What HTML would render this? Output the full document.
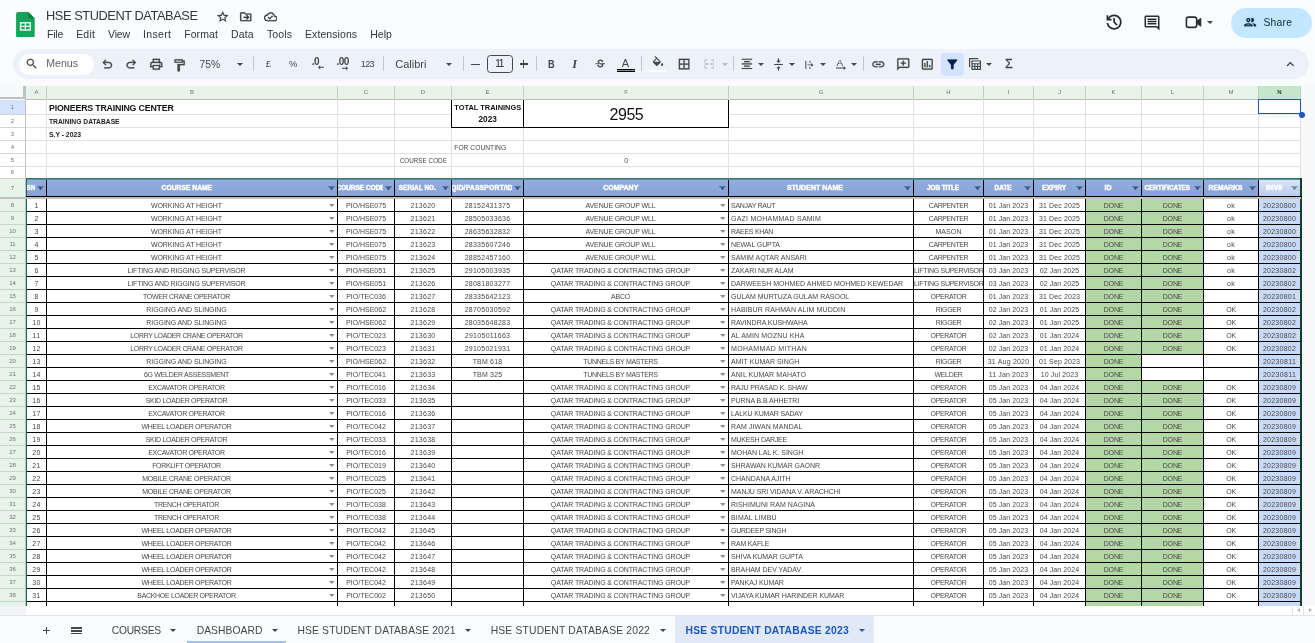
<!DOCTYPE html>
<html lang="en"><head><meta charset="utf-8"><title>HSE STUDENT DATABASE - Google Sheets</title>
<style>
html,body{margin:0;padding:0}
body{width:1315px;height:643px;overflow:hidden;background:#f9fbfd;font-family:"Liberation Sans",sans-serif;color:#1f1f1f}
#app{will-change:transform;position:relative;width:1315px;height:643px;overflow:hidden;background:#f9fbfd}
#app div,#app svg,#app span{position:absolute}
.t{white-space:pre;overflow:visible}
.c{white-space:pre;overflow:hidden;text-align:center;font-size:7px;color:#484848;height:12px;line-height:12px}

.l{text-align:left}
.hl{background:#000}
.gl{background:#e1e1e1}
.rh{left:0;width:25px;text-align:center;font-size:6px;color:#6e7378;height:12px;line-height:12px}
.ch{top:86px;height:13px;line-height:13px;text-align:center;font-size:6px;color:#6e7378}
.hd{white-space:pre;overflow:hidden;text-align:center;font-weight:700;color:#fff;-webkit-text-stroke:0.4px #fff;top:179px;height:17px;line-height:18px}
.ic{fill:#444746}
.da{fill:#8c8c8c}
.dd{width:0;height:0;border-left:2.8px solid transparent;border-right:2.8px solid transparent;border-top:3px solid #8c8c8c}
.tc{width:0;height:0;border-left:3px solid transparent;border-right:3px solid transparent;border-top:3px solid #444746}
.sep{width:1px;height:15px;top:56px;background:#c7c7c7}
</style></head><body><div id="app">
<svg style="left:16.3px;top:11.9px" width="18.8" height="25.5" viewBox="0 0 19 26"><path d="M2 0h10.500l6.500 6.500v17.500a2 2 0 0 1-2 2H2a2 2 0 0 1-2-2V2a2 2 0 0 1 2-2z" fill="#17a35b"/><path d="M12.500 0l6.500 6.500h-4.500a2 2 0 0 1-2-2z" fill="#0b8043"/><path d="M3.800 10.200h11.400v8.900h-11.400z M5.300 11.700v2.200h3.500v-2.200z M10.200 11.700v2.200h3.500v-2.200z M5.300 15.300v2.300h3.500v-2.300z M10.200 15.300v2.300h3.500v-2.300z" fill="#e8f5ee" fill-rule="evenodd"/></svg><div class="t" style="left:46.0px;top:5.6px;height:20px;line-height:20px;font-size:12.8px;letter-spacing:-0.425px;font-weight:400;color:#33373a;">HSE STUDENT DATABASE</div><div class="t" style="left:47.0px;top:24.0px;height:20px;line-height:20px;font-size:10.5px;letter-spacing:-0.23px;font-weight:400;color:#33373a;">File</div><div class="t" style="left:76.2px;top:24.0px;height:20px;line-height:20px;font-size:10.5px;letter-spacing:0.177px;font-weight:400;color:#33373a;">Edit</div><div class="t" style="left:108.0px;top:24.0px;height:20px;line-height:20px;font-size:10.5px;letter-spacing:-0.145px;font-weight:400;color:#33373a;">View</div><div class="t" style="left:143.0px;top:24.0px;height:20px;line-height:20px;font-size:10.5px;letter-spacing:0.322px;font-weight:400;color:#33373a;">Insert</div><div class="t" style="left:184.2px;top:24.0px;height:20px;line-height:20px;font-size:10.5px;letter-spacing:0.089px;font-weight:400;color:#33373a;">Format</div><div class="t" style="left:231.0px;top:24.0px;height:20px;line-height:20px;font-size:10.5px;letter-spacing:0.153px;font-weight:400;color:#33373a;">Data</div><div class="t" style="left:267.0px;top:24.0px;height:20px;line-height:20px;font-size:10.5px;letter-spacing:0.097px;font-weight:400;color:#33373a;">Tools</div><div class="t" style="left:305.0px;top:24.0px;height:20px;line-height:20px;font-size:10.5px;letter-spacing:0.082px;font-weight:400;color:#33373a;">Extensions</div><div class="t" style="left:370.2px;top:24.0px;height:20px;line-height:20px;font-size:10.5px;letter-spacing:0.048px;font-weight:400;color:#33373a;">Help</div><div style="left:12.5px;top:49px;width:1296.5px;height:30px;border-radius:15px;background:#edf2fa"></div><div style="left:19px;top:54px;width:74.5px;height:21px;border-radius:10.5px;background:#fff"></div><div class="t" style="left:46.2px;top:53.0px;height:20px;line-height:20px;font-size:10.59px;letter-spacing:0.01px;font-weight:400;color:#5f6368;">Menus</div><div class="t" style="left:199.5px;top:54.7px;height:20px;line-height:20px;font-size:10.24px;letter-spacing:0.005px;font-weight:400;color:#444746;">75%</div><div class="t" style="left:265.8px;top:54.0px;height:20px;line-height:20px;font-size:9.33px;letter-spacing:-0.003px;font-weight:400;color:#444746;">£</div><div class="t" style="left:289.0px;top:54.0px;height:20px;line-height:20px;font-size:9.44px;letter-spacing:0.009px;font-weight:400;color:#444746;">%</div><div class="t" style="left:360.8px;top:54.2px;height:20px;line-height:20px;font-size:9.2px;letter-spacing:-0.715px;font-weight:400;color:#444746;">123</div><div class="t" style="left:395.2px;top:54.0px;height:20px;line-height:20px;font-size:11.04px;letter-spacing:0.005px;font-weight:400;color:#444746;">Calibri</div><div class="t" style="left:495.2px;top:54.2px;height:20px;line-height:20px;font-size:10px;letter-spacing:-1.2px;color:#1f1f1f">11</div><div style="left:487px;top:55px;width:25.75px;height:17.5px;border:1px solid #444746;border-radius:3.5px;box-sizing:border-box"></div><div class="sep" style="left:253px"></div><div class="sep" style="left:383px"></div><div class="sep" style="left:463px"></div><div class="sep" style="left:536px"></div><div class="sep" style="left:641px"></div><div class="sep" style="left:733px"></div><div class="sep" style="left:863px"></div><div class="tc" style="left:236.5px;top:63px"></div><div class="tc" style="left:445.8px;top:63px"></div><div class="tc" style="left:757.5px;top:63px"></div><div class="tc" style="left:788.5px;top:63px"></div><div class="tc" style="left:819.5px;top:63px"></div><div class="tc" style="left:850.8px;top:63px"></div><div class="tc" style="left:986px;top:63px"></div><div class="tc" style="left:721.5px;top:63px;border-top-color:#b9bcc0"></div><div style="left:940.5px;top:53px;width:23px;height:22.5px;border-radius:4px;background:#d3e3fd"></div><div style="left:1231px;top:8px;width:81px;height:30px;border-radius:15px;background:#c2e7ff"></div><div class="t" style="left:1263.5px;top:12.9px;height:20px;line-height:20px;font-size:10.3px;letter-spacing:0.243px;font-weight:400;color:#0b2a42;">Share</div><div class="tc" style="left:1206.8px;top:21px"></div><div style="left:0;top:86px;width:1301px;height:520px;background:#fff"></div><div style="left:1301px;top:86px;width:14px;height:530px;background:#f8f9fa"></div><div style="left:0;top:86px;width:26px;height:13px;background:#f8f9fa"></div><div style="left:26px;top:86px;width:1275px;height:13px;background:#e6f4ea"></div><div style="left:1259px;top:86px;width:41px;height:13px;background:#c4e7cb"></div><div style="left:23px;top:86px;width:3px;height:14px;background:#c0c0c0"></div><div style="left:0;top:97px;width:26px;height:3px;background:#c0c0c0"></div><div class="ch" style="left:27px;width:19px;color:#6e7378;font-weight:400">A</div><div style="left:46px;top:86px;width:1px;height:13px;background:#c6cac7"></div><div class="ch" style="left:47px;width:290px;color:#6e7378;font-weight:400">B</div><div style="left:337px;top:86px;width:1px;height:13px;background:#c6cac7"></div><div class="ch" style="left:338px;width:56px;color:#6e7378;font-weight:400">C</div><div style="left:394px;top:86px;width:1px;height:13px;background:#c6cac7"></div><div class="ch" style="left:395px;width:56px;color:#6e7378;font-weight:400">D</div><div style="left:451px;top:86px;width:1px;height:13px;background:#c6cac7"></div><div class="ch" style="left:452px;width:71px;color:#6e7378;font-weight:400">E</div><div style="left:523px;top:86px;width:1px;height:13px;background:#c6cac7"></div><div class="ch" style="left:524px;width:204px;color:#6e7378;font-weight:400">F</div><div style="left:728px;top:86px;width:1px;height:13px;background:#c6cac7"></div><div class="ch" style="left:729px;width:184px;color:#6e7378;font-weight:400">G</div><div style="left:913px;top:86px;width:1px;height:13px;background:#c6cac7"></div><div class="ch" style="left:914px;width:69px;color:#6e7378;font-weight:400">H</div><div style="left:983px;top:86px;width:1px;height:13px;background:#c6cac7"></div><div class="ch" style="left:984px;width:49px;color:#6e7378;font-weight:400">I</div><div style="left:1033px;top:86px;width:1px;height:13px;background:#c6cac7"></div><div class="ch" style="left:1034px;width:51px;color:#6e7378;font-weight:400">J</div><div style="left:1085px;top:86px;width:1px;height:13px;background:#c6cac7"></div><div class="ch" style="left:1086px;width:55px;color:#6e7378;font-weight:400">K</div><div style="left:1141px;top:86px;width:1px;height:13px;background:#c6cac7"></div><div class="ch" style="left:1142px;width:61px;color:#6e7378;font-weight:400">L</div><div style="left:1203px;top:86px;width:1px;height:13px;background:#c6cac7"></div><div class="ch" style="left:1204px;width:54px;color:#6e7378;font-weight:400">M</div><div style="left:1258px;top:86px;width:1px;height:13px;background:#c6cac7"></div><div class="ch" style="left:1259px;width:41px;color:#3c4043;font-weight:700">N</div><div style="left:1300px;top:86px;width:1px;height:13px;background:#c6cac7"></div><div style="left:26px;top:99px;width:1275px;height:1px;background:#bdbdbd"></div><div style="left:0;top:99px;width:25px;height:507px;background:#fff"></div><div style="left:0;top:100px;width:25px;height:14px;background:#d3e3fd"></div><div style="left:0;top:178px;width:25px;height:428px;background:#e6f4ea"></div><div style="left:25px;top:99px;width:1px;height:507px;background:#c0c0c0"></div><div class="rh" style="top:100.5px">1</div><div style="left:0;top:114px;width:25px;height:1px;background:#d5d5d5"></div><div class="rh" style="top:114.5px">2</div><div style="left:0;top:127px;width:25px;height:1px;background:#d5d5d5"></div><div class="rh" style="top:127.5px">3</div><div style="left:0;top:140px;width:25px;height:1px;background:#d5d5d5"></div><div class="rh" style="top:140.5px">4</div><div style="left:0;top:153px;width:25px;height:1px;background:#d5d5d5"></div><div class="rh" style="top:153.5px">5</div><div style="left:0;top:166px;width:25px;height:1px;background:#d5d5d5"></div><div class="rh" style="top:166.0px">6</div><div style="left:0;top:178px;width:25px;height:1px;background:#d5d5d5"></div><div class="rh" style="top:182.0px">7</div><div class="rh" style="top:198.5px">8</div><div style="left:0;top:211px;width:25px;height:1px;background:#c9d3cc"></div><div class="rh" style="top:211.5px">9</div><div style="left:0;top:224px;width:25px;height:1px;background:#c9d3cc"></div><div class="rh" style="top:224.5px">10</div><div style="left:0;top:237px;width:25px;height:1px;background:#c9d3cc"></div><div class="rh" style="top:237.5px">11</div><div style="left:0;top:250px;width:25px;height:1px;background:#c9d3cc"></div><div class="rh" style="top:250.5px">12</div><div style="left:0;top:263px;width:25px;height:1px;background:#c9d3cc"></div><div class="rh" style="top:263.5px">13</div><div style="left:0;top:276px;width:25px;height:1px;background:#c9d3cc"></div><div class="rh" style="top:276.5px">14</div><div style="left:0;top:289px;width:25px;height:1px;background:#c9d3cc"></div><div class="rh" style="top:289.5px">15</div><div style="left:0;top:302px;width:25px;height:1px;background:#c9d3cc"></div><div class="rh" style="top:302.5px">16</div><div style="left:0;top:315px;width:25px;height:1px;background:#c9d3cc"></div><div class="rh" style="top:315.5px">17</div><div style="left:0;top:328px;width:25px;height:1px;background:#c9d3cc"></div><div class="rh" style="top:328.5px">18</div><div style="left:0;top:341px;width:25px;height:1px;background:#c9d3cc"></div><div class="rh" style="top:341.5px">19</div><div style="left:0;top:354px;width:25px;height:1px;background:#c9d3cc"></div><div class="rh" style="top:354.5px">20</div><div style="left:0;top:367px;width:25px;height:1px;background:#c9d3cc"></div><div class="rh" style="top:367.5px">21</div><div style="left:0;top:380px;width:25px;height:1px;background:#c9d3cc"></div><div class="rh" style="top:380.5px">22</div><div style="left:0;top:393px;width:25px;height:1px;background:#c9d3cc"></div><div class="rh" style="top:393.5px">23</div><div style="left:0;top:406px;width:25px;height:1px;background:#c9d3cc"></div><div class="rh" style="top:406.5px">24</div><div style="left:0;top:419px;width:25px;height:1px;background:#c9d3cc"></div><div class="rh" style="top:419.5px">25</div><div style="left:0;top:432px;width:25px;height:1px;background:#c9d3cc"></div><div class="rh" style="top:432.5px">26</div><div style="left:0;top:445px;width:25px;height:1px;background:#c9d3cc"></div><div class="rh" style="top:445.5px">27</div><div style="left:0;top:458px;width:25px;height:1px;background:#c9d3cc"></div><div class="rh" style="top:458.5px">28</div><div style="left:0;top:471px;width:25px;height:1px;background:#c9d3cc"></div><div class="rh" style="top:471.5px">29</div><div style="left:0;top:484px;width:25px;height:1px;background:#c9d3cc"></div><div class="rh" style="top:484.5px">30</div><div style="left:0;top:497px;width:25px;height:1px;background:#c9d3cc"></div><div class="rh" style="top:497.5px">31</div><div style="left:0;top:510px;width:25px;height:1px;background:#c9d3cc"></div><div class="rh" style="top:510.5px">32</div><div style="left:0;top:523px;width:25px;height:1px;background:#c9d3cc"></div><div class="rh" style="top:523.5px">33</div><div style="left:0;top:536px;width:25px;height:1px;background:#c9d3cc"></div><div class="rh" style="top:536.5px">34</div><div style="left:0;top:549px;width:25px;height:1px;background:#c9d3cc"></div><div class="rh" style="top:549.5px">35</div><div style="left:0;top:562px;width:25px;height:1px;background:#c9d3cc"></div><div class="rh" style="top:562.5px">36</div><div style="left:0;top:575px;width:25px;height:1px;background:#c9d3cc"></div><div class="rh" style="top:575.5px">37</div><div style="left:0;top:588px;width:25px;height:1px;background:#c9d3cc"></div><div class="rh" style="top:588.5px">38</div><div style="left:0;top:601px;width:25px;height:1px;background:#c9d3cc"></div><div class="rh" style="top:601.5px;height:4px;overflow:hidden">39</div><div class="gl" style="left:26px;top:114px;width:1275px;height:1px"></div><div class="gl" style="left:26px;top:127px;width:1275px;height:1px"></div><div class="gl" style="left:26px;top:140px;width:1275px;height:1px"></div><div class="gl" style="left:26px;top:153px;width:1275px;height:1px"></div><div class="gl" style="left:26px;top:166px;width:1275px;height:1px"></div><div class="gl" style="left:46px;top:99px;width:1px;height:79px"></div><div class="gl" style="left:337px;top:99px;width:1px;height:79px"></div><div class="gl" style="left:394px;top:99px;width:1px;height:79px"></div><div class="gl" style="left:451px;top:99px;width:1px;height:79px"></div><div class="gl" style="left:523px;top:99px;width:1px;height:79px"></div><div class="gl" style="left:728px;top:99px;width:1px;height:79px"></div><div class="gl" style="left:913px;top:99px;width:1px;height:79px"></div><div class="gl" style="left:983px;top:99px;width:1px;height:79px"></div><div class="gl" style="left:1033px;top:99px;width:1px;height:79px"></div><div class="gl" style="left:1085px;top:99px;width:1px;height:79px"></div><div class="gl" style="left:1141px;top:99px;width:1px;height:79px"></div><div class="gl" style="left:1203px;top:99px;width:1px;height:79px"></div><div class="gl" style="left:1258px;top:99px;width:1px;height:79px"></div><div class="gl" style="left:1300px;top:99px;width:1px;height:79px"></div><div style="left:452px;top:100px;width:276px;height:27px;background:#fff"></div><div class="hl" style="left:451px;top:100px;width:1px;height:28px"></div><div class="hl" style="left:523px;top:100px;width:1px;height:28px"></div><div class="hl" style="left:728px;top:100px;width:1px;height:28px"></div><div class="hl" style="left:451px;top:127px;width:278px;height:1px"></div><div class="t" style="left:49.0px;top:97.6px;height:20px;line-height:20px;font-size:8.8px;letter-spacing:-0.185px;font-weight:700;color:#111;">PIONEERS TRAINING CENTER</div><div class="t" style="left:49.0px;top:111.6px;height:20px;line-height:20px;font-size:6.71px;letter-spacing:0.005px;font-weight:700;color:#222;">TRAINING DATABASE</div><div class="t" style="left:49.0px;top:124.5px;height:20px;line-height:20px;font-size:6.8px;letter-spacing:0.0px;font-weight:700;color:#222;">S.Y - 2023</div><div class="t" style="left:454.3px;top:98.2px;height:20px;line-height:20px;font-size:7.43px;letter-spacing:0.007px;font-weight:700;color:#111;">TOTAL TRAININGS</div><div class="t" style="left:478.5px;top:109.6px;height:20px;line-height:20px;font-size:8.25px;letter-spacing:0.035px;font-weight:700;color:#111;">2023</div><div class="t" style="left:609.5px;top:104.6px;height:20px;line-height:20px;font-size:16px;letter-spacing:-0.448px;font-weight:400;color:#111;">2955</div><div class="t" style="left:454.3px;top:138.2px;height:20px;line-height:20px;font-size:6.71px;letter-spacing:0.003px;font-weight:400;color:#484848;">FOR COUNTING</div><div class="t" style="left:399.7px;top:151.0px;height:20px;line-height:20px;font-size:6.34px;letter-spacing:0.007px;font-weight:400;color:#484848;">COURSE CODE</div><div class="t" style="left:624.3px;top:151.0px;height:20px;line-height:20px;font-size:7.01px;letter-spacing:-0.006px;font-weight:400;color:#484848;">0</div><div style="left:27px;top:179px;width:1274px;height:17px;background:linear-gradient(#94aedf,#86a2d7)"></div><div style="left:1259px;top:179px;width:42px;height:17px;background:linear-gradient(#dbe6f8,#b9cdf0)"></div><div class="hd" style="left:27px;width:8px;font-size:6.9px;letter-spacing:-0.16px"><span style="position:absolute;left:50%;transform:translateX(-50%)">SN</span></div><svg style="left:37.1px;top:185.7px" width="7" height="4.800" viewBox="0 0 7 4.800"><path d="M0 0h7v1.100H0z" fill="#5d7ba6"/><path d="M1.100 1.100h4.800L4.500 3H2.500z M2.500 3h2L3.500 4.700z" fill="#3a5779"/></svg><div class="t" style="left:161.6px;top:178.0px;height:20px;line-height:20px;font-size:6.74px;letter-spacing:-0.001px;font-weight:700;color:#fff;-webkit-text-stroke:0.4px #fff;">COURSE NAME</div><svg style="left:328.1px;top:185.7px" width="7" height="4.800" viewBox="0 0 7 4.800"><path d="M0 0h7v1.100H0z" fill="#5d7ba6"/><path d="M1.100 1.100h4.800L4.500 3H2.500z M2.500 3h2L3.500 4.700z" fill="#3a5779"/></svg><div class="hd" style="left:338px;width:45px;font-size:6.9px;letter-spacing:-0.27px"><span style="position:absolute;left:50%;transform:translateX(-50%)">COURSE CODE</span></div><svg style="left:385.1px;top:185.7px" width="7" height="4.800" viewBox="0 0 7 4.800"><path d="M0 0h7v1.100H0z" fill="#5d7ba6"/><path d="M1.100 1.100h4.800L4.500 3H2.500z M2.500 3h2L3.500 4.700z" fill="#3a5779"/></svg><div class="t" style="left:398.8px;top:178.0px;height:20px;line-height:20px;font-size:6.52px;letter-spacing:0.003px;font-weight:700;color:#fff;-webkit-text-stroke:0.4px #fff;">SERIAL NO.</div><svg style="left:442.1px;top:185.7px" width="7" height="4.800" viewBox="0 0 7 4.800"><path d="M0 0h7v1.100H0z" fill="#5d7ba6"/><path d="M1.100 1.100h4.800L4.500 3H2.500z M2.500 3h2L3.500 4.700z" fill="#3a5779"/></svg><div class="hd" style="left:452px;width:60px;font-size:6.9px;letter-spacing:0.1px"><span style="position:absolute;left:50%;transform:translateX(-50%)">QID/PASSPORT/ID</span></div><svg style="left:514.1px;top:185.7px" width="7" height="4.800" viewBox="0 0 7 4.800"><path d="M0 0h7v1.100H0z" fill="#5d7ba6"/><path d="M1.100 1.100h4.800L4.500 3H2.500z M2.500 3h2L3.500 4.700z" fill="#3a5779"/></svg><div class="t" style="left:603.2px;top:178.0px;height:20px;line-height:20px;font-size:6.97px;letter-spacing:-0.001px;font-weight:700;color:#fff;-webkit-text-stroke:0.4px #fff;">COMPANY</div><svg style="left:719.1px;top:185.7px" width="7" height="4.800" viewBox="0 0 7 4.800"><path d="M0 0h7v1.100H0z" fill="#5d7ba6"/><path d="M1.100 1.100h4.800L4.500 3H2.500z M2.500 3h2L3.500 4.700z" fill="#3a5779"/></svg><div class="t" style="left:787.0px;top:178.0px;height:20px;line-height:20px;font-size:7.05px;letter-spacing:0.001px;font-weight:700;color:#fff;-webkit-text-stroke:0.4px #fff;">STUDENT NAME</div><svg style="left:904.1px;top:185.7px" width="7" height="4.800" viewBox="0 0 7 4.800"><path d="M0 0h7v1.100H0z" fill="#5d7ba6"/><path d="M1.100 1.100h4.800L4.500 3H2.500z M2.500 3h2L3.500 4.700z" fill="#3a5779"/></svg><div class="t" style="left:927.0px;top:178.0px;height:20px;line-height:20px;font-size:6.46px;letter-spacing:-0.109px;font-weight:700;color:#fff;-webkit-text-stroke:0.4px #fff;">JOB TITLE</div><svg style="left:974.1px;top:185.7px" width="7" height="4.800" viewBox="0 0 7 4.800"><path d="M0 0h7v1.100H0z" fill="#5d7ba6"/><path d="M1.100 1.100h4.800L4.500 3H2.500z M2.500 3h2L3.500 4.700z" fill="#3a5779"/></svg><div class="t" style="left:994.6px;top:178.0px;height:20px;line-height:20px;font-size:6.46px;letter-spacing:-0.023px;font-weight:700;color:#fff;-webkit-text-stroke:0.4px #fff;">DATE</div><svg style="left:1024.1px;top:185.7px" width="7" height="4.800" viewBox="0 0 7 4.800"><path d="M0 0h7v1.100H0z" fill="#5d7ba6"/><path d="M1.100 1.100h4.800L4.500 3H2.500z M2.500 3h2L3.500 4.700z" fill="#3a5779"/></svg><div class="t" style="left:1042.3px;top:178.0px;height:20px;line-height:20px;font-size:6.53px;letter-spacing:0.005px;font-weight:700;color:#fff;-webkit-text-stroke:0.4px #fff;">EXPIRY</div><svg style="left:1076.1px;top:185.7px" width="7" height="4.800" viewBox="0 0 7 4.800"><path d="M0 0h7v1.100H0z" fill="#5d7ba6"/><path d="M1.100 1.100h4.800L4.500 3H2.500z M2.500 3h2L3.500 4.700z" fill="#3a5779"/></svg><div class="t" style="left:1104.4px;top:178.0px;height:20px;line-height:20px;font-size:7.14px;letter-spacing:0.037px;font-weight:700;color:#fff;-webkit-text-stroke:0.4px #fff;">ID</div><svg style="left:1132.1px;top:185.7px" width="7" height="4.800" viewBox="0 0 7 4.800"><path d="M0 0h7v1.100H0z" fill="#5d7ba6"/><path d="M1.100 1.100h4.800L4.500 3H2.500z M2.500 3h2L3.500 4.700z" fill="#3a5779"/></svg><div class="t" style="left:1144.4px;top:178.0px;height:20px;line-height:20px;font-size:6.46px;letter-spacing:-0.075px;font-weight:700;color:#fff;-webkit-text-stroke:0.4px #fff;">CERTIFICATES</div><svg style="left:1194.1px;top:185.7px" width="7" height="4.800" viewBox="0 0 7 4.800"><path d="M0 0h7v1.100H0z" fill="#5d7ba6"/><path d="M1.100 1.100h4.800L4.500 3H2.500z M2.500 3h2L3.500 4.700z" fill="#3a5779"/></svg><div class="t" style="left:1208.6px;top:178.0px;height:20px;line-height:20px;font-size:6.69px;letter-spacing:-0.002px;font-weight:700;color:#fff;-webkit-text-stroke:0.4px #fff;">REMARKS</div><svg style="left:1249.1px;top:185.7px" width="7" height="4.800" viewBox="0 0 7 4.800"><path d="M0 0h7v1.100H0z" fill="#5d7ba6"/><path d="M1.100 1.100h4.800L4.500 3H2.500z M2.500 3h2L3.500 4.700z" fill="#3a5779"/></svg><div class="t" style="left:1266.0px;top:178.0px;height:20px;line-height:20px;font-size:7.14px;letter-spacing:0.139px;font-weight:700;color:#fff;-webkit-text-stroke:0.4px #fff;">INV#</div><svg style="left:1291.1px;top:185.7px" width="7" height="4.800" viewBox="0 0 7 4.800"><path d="M0 0h7v1.100H0z" fill="#8ea2bd"/><path d="M1.100 1.100h4.800L4.500 3H2.500z M2.500 3h2L3.500 4.700z" fill="#74879f"/></svg><div style="left:1086px;top:199px;width:55px;height:407px;background:#b3d7a5"></div><div style="left:1142px;top:199px;width:61px;height:407px;background:#b3d7a5"></div><div style="left:1142px;top:355px;width:61px;height:25px;background:#fff"></div><div style="left:1259px;top:199px;width:42px;height:407px;background:#c9daf8"></div><div class="c" style="left:27px;top:200px;width:19px;letter-spacing:0.25px">1</div><div class="c" style="left:47px;top:200px;width:279px;letter-spacing:-0.08px">WORKING AT HEIGHT</div><div class="c" style="left:338px;top:200px;width:56px;letter-spacing:0.01px">PIO/HSE075</div><div class="c" style="left:395px;top:200px;width:56px;letter-spacing:0.26px">213620</div><div class="c" style="left:452px;top:200px;width:71px;letter-spacing:0.26px">28152431375</div><div class="c" style="left:524px;top:200px;width:193px;letter-spacing:-0.14px">AVENUE GROUP WLL</div><div class="c l" style="left:731px;top:200px;width:182px;letter-spacing:-0.28px">SANJAY RAUT</div><div class="c" style="left:914px;top:200px;width:69px;letter-spacing:-0.41px">CARPENTER</div><div class="c" style="left:984px;top:200px;width:49px;letter-spacing:0.08px">01 Jan 2023</div><div class="c" style="left:1034px;top:200px;width:51px;letter-spacing:0.13px">31 Dec 2025</div><div class="c" style="left:1086px;top:200px;width:55px;letter-spacing:-0.12px">DONE</div><div class="c" style="left:1142px;top:200px;width:61px;letter-spacing:-0.12px">DONE</div><div class="c" style="left:1204px;top:200px;width:54px;letter-spacing:0.32px">ok</div><div class="c" style="left:1259px;top:200px;width:41px;letter-spacing:0.26px">20230800</div><svg class="da" style="left:328.6px;top:204px" width="5.600" height="3" viewBox="0 0 5.600 3"><path d="M0 0h5.600L2.800 3z"/></svg><svg class="da" style="left:719.6px;top:204px" width="5.600" height="3" viewBox="0 0 5.600 3"><path d="M0 0h5.600L2.800 3z"/></svg><div class="c" style="left:27px;top:213px;width:19px;letter-spacing:0.25px">2</div><div class="c" style="left:47px;top:213px;width:279px;letter-spacing:-0.08px">WORKING AT HEIGHT</div><div class="c" style="left:338px;top:213px;width:56px;letter-spacing:0.01px">PIO/HSE075</div><div class="c" style="left:395px;top:213px;width:56px;letter-spacing:0.26px">213621</div><div class="c" style="left:452px;top:213px;width:71px;letter-spacing:0.26px">28505033636</div><div class="c" style="left:524px;top:213px;width:193px;letter-spacing:-0.14px">AVENUE GROUP WLL</div><div class="c l" style="left:731px;top:213px;width:182px;letter-spacing:0.24px">GAZI MOHAMMAD SAMIM</div><div class="c" style="left:914px;top:213px;width:69px;letter-spacing:-0.41px">CARPENTER</div><div class="c" style="left:984px;top:213px;width:49px;letter-spacing:0.08px">01 Jan 2023</div><div class="c" style="left:1034px;top:213px;width:51px;letter-spacing:0.13px">31 Dec 2025</div><div class="c" style="left:1086px;top:213px;width:55px;letter-spacing:-0.12px">DONE</div><div class="c" style="left:1142px;top:213px;width:61px;letter-spacing:-0.12px">DONE</div><div class="c" style="left:1204px;top:213px;width:54px;letter-spacing:0.32px">ok</div><div class="c" style="left:1259px;top:213px;width:41px;letter-spacing:0.26px">20230800</div><svg class="da" style="left:328.6px;top:217px" width="5.600" height="3" viewBox="0 0 5.600 3"><path d="M0 0h5.600L2.800 3z"/></svg><svg class="da" style="left:719.6px;top:217px" width="5.600" height="3" viewBox="0 0 5.600 3"><path d="M0 0h5.600L2.800 3z"/></svg><div class="c" style="left:27px;top:226px;width:19px;letter-spacing:0.25px">3</div><div class="c" style="left:47px;top:226px;width:279px;letter-spacing:-0.08px">WORKING AT HEIGHT</div><div class="c" style="left:338px;top:226px;width:56px;letter-spacing:0.01px">PIO/HSE075</div><div class="c" style="left:395px;top:226px;width:56px;letter-spacing:0.26px">213622</div><div class="c" style="left:452px;top:226px;width:71px;letter-spacing:0.26px">28635632832</div><div class="c" style="left:524px;top:226px;width:193px;letter-spacing:-0.14px">AVENUE GROUP WLL</div><div class="c l" style="left:731px;top:226px;width:182px;letter-spacing:-0.3px">RAEES KHAN</div><div class="c" style="left:914px;top:226px;width:69px;letter-spacing:0.11px">MASON</div><div class="c" style="left:984px;top:226px;width:49px;letter-spacing:0.08px">01 Jan 2023</div><div class="c" style="left:1034px;top:226px;width:51px;letter-spacing:0.13px">31 Dec 2025</div><div class="c" style="left:1086px;top:226px;width:55px;letter-spacing:-0.12px">DONE</div><div class="c" style="left:1142px;top:226px;width:61px;letter-spacing:-0.12px">DONE</div><div class="c" style="left:1204px;top:226px;width:54px;letter-spacing:0.32px">ok</div><div class="c" style="left:1259px;top:226px;width:41px;letter-spacing:0.26px">20230800</div><svg class="da" style="left:328.6px;top:230px" width="5.600" height="3" viewBox="0 0 5.600 3"><path d="M0 0h5.600L2.800 3z"/></svg><svg class="da" style="left:719.6px;top:230px" width="5.600" height="3" viewBox="0 0 5.600 3"><path d="M0 0h5.600L2.800 3z"/></svg><div class="c" style="left:27px;top:239px;width:19px;letter-spacing:0.25px">4</div><div class="c" style="left:47px;top:239px;width:279px;letter-spacing:-0.08px">WORKING AT HEIGHT</div><div class="c" style="left:338px;top:239px;width:56px;letter-spacing:0.01px">PIO/HSE075</div><div class="c" style="left:395px;top:239px;width:56px;letter-spacing:0.26px">213623</div><div class="c" style="left:452px;top:239px;width:71px;letter-spacing:0.26px">28335607246</div><div class="c" style="left:524px;top:239px;width:193px;letter-spacing:-0.14px">AVENUE GROUP WLL</div><div class="c l" style="left:731px;top:239px;width:182px;letter-spacing:-0.09px">NEWAL GUPTA</div><div class="c" style="left:914px;top:239px;width:69px;letter-spacing:-0.41px">CARPENTER</div><div class="c" style="left:984px;top:239px;width:49px;letter-spacing:0.08px">01 Jan 2023</div><div class="c" style="left:1034px;top:239px;width:51px;letter-spacing:0.13px">31 Dec 2025</div><div class="c" style="left:1086px;top:239px;width:55px;letter-spacing:-0.12px">DONE</div><div class="c" style="left:1142px;top:239px;width:61px;letter-spacing:-0.12px">DONE</div><div class="c" style="left:1204px;top:239px;width:54px;letter-spacing:0.32px">ok</div><div class="c" style="left:1259px;top:239px;width:41px;letter-spacing:0.26px">20230800</div><svg class="da" style="left:328.6px;top:243px" width="5.600" height="3" viewBox="0 0 5.600 3"><path d="M0 0h5.600L2.800 3z"/></svg><svg class="da" style="left:719.6px;top:243px" width="5.600" height="3" viewBox="0 0 5.600 3"><path d="M0 0h5.600L2.800 3z"/></svg><div class="c" style="left:27px;top:252px;width:19px;letter-spacing:0.25px">5</div><div class="c" style="left:47px;top:252px;width:279px;letter-spacing:-0.08px">WORKING AT HEIGHT</div><div class="c" style="left:338px;top:252px;width:56px;letter-spacing:0.01px">PIO/HSE075</div><div class="c" style="left:395px;top:252px;width:56px;letter-spacing:0.26px">213624</div><div class="c" style="left:452px;top:252px;width:71px;letter-spacing:0.26px">28852457160</div><div class="c" style="left:524px;top:252px;width:193px;letter-spacing:-0.14px">AVENUE GROUP WLL</div><div class="c l" style="left:731px;top:252px;width:182px;letter-spacing:-0.0px">SAMIM AQTAR ANSARI</div><div class="c" style="left:914px;top:252px;width:69px;letter-spacing:-0.41px">CARPENTER</div><div class="c" style="left:984px;top:252px;width:49px;letter-spacing:0.08px">01 Jan 2023</div><div class="c" style="left:1034px;top:252px;width:51px;letter-spacing:0.13px">31 Dec 2025</div><div class="c" style="left:1086px;top:252px;width:55px;letter-spacing:-0.12px">DONE</div><div class="c" style="left:1142px;top:252px;width:61px;letter-spacing:-0.12px">DONE</div><div class="c" style="left:1204px;top:252px;width:54px;letter-spacing:0.32px">ok</div><div class="c" style="left:1259px;top:252px;width:41px;letter-spacing:0.26px">20230800</div><svg class="da" style="left:328.6px;top:256px" width="5.600" height="3" viewBox="0 0 5.600 3"><path d="M0 0h5.600L2.800 3z"/></svg><svg class="da" style="left:719.6px;top:256px" width="5.600" height="3" viewBox="0 0 5.600 3"><path d="M0 0h5.600L2.800 3z"/></svg><div class="c" style="left:27px;top:265px;width:19px;letter-spacing:0.25px">6</div><div class="c" style="left:47px;top:265px;width:279px;letter-spacing:-0.18px">LIFTING AND RIGGING SUPERVISOR</div><div class="c" style="left:338px;top:265px;width:56px;letter-spacing:0.01px">PIO/HSE051</div><div class="c" style="left:395px;top:265px;width:56px;letter-spacing:0.26px">213625</div><div class="c" style="left:452px;top:265px;width:71px;letter-spacing:0.26px">29105003935</div><div class="c" style="left:524px;top:265px;width:193px;letter-spacing:-0.14px">QATAR TRADING &amp; CONTRACTING GROUP</div><div class="c l" style="left:731px;top:265px;width:182px;letter-spacing:-0.03px">ZAKARI NUR ALAM</div><div class="c" style="left:914px;top:265px;width:69px;letter-spacing:-0.28px">LIFTING SUPERVISOR</div><div class="c" style="left:984px;top:265px;width:49px;letter-spacing:0.08px">03 Jan 2023</div><div class="c" style="left:1034px;top:265px;width:51px;letter-spacing:0.08px">02 Jan 2025</div><div class="c" style="left:1086px;top:265px;width:55px;letter-spacing:-0.12px">DONE</div><div class="c" style="left:1142px;top:265px;width:61px;letter-spacing:-0.12px">DONE</div><div class="c" style="left:1204px;top:265px;width:54px;letter-spacing:0.32px">ok</div><div class="c" style="left:1259px;top:265px;width:41px;letter-spacing:0.26px">20230802</div><svg class="da" style="left:328.6px;top:269px" width="5.600" height="3" viewBox="0 0 5.600 3"><path d="M0 0h5.600L2.800 3z"/></svg><svg class="da" style="left:719.6px;top:269px" width="5.600" height="3" viewBox="0 0 5.600 3"><path d="M0 0h5.600L2.800 3z"/></svg><div class="c" style="left:27px;top:278px;width:19px;letter-spacing:0.25px">7</div><div class="c" style="left:47px;top:278px;width:279px;letter-spacing:-0.18px">LIFTING AND RIGGING SUPERVISOR</div><div class="c" style="left:338px;top:278px;width:56px;letter-spacing:0.01px">PIO/HSE051</div><div class="c" style="left:395px;top:278px;width:56px;letter-spacing:0.26px">213626</div><div class="c" style="left:452px;top:278px;width:71px;letter-spacing:0.26px">28081803277</div><div class="c" style="left:524px;top:278px;width:193px;letter-spacing:-0.14px">QATAR TRADING &amp; CONTRACTING GROUP</div><div class="c l" style="left:731px;top:278px;width:182px;letter-spacing:-0.0px">DARWEESH MOHMED AHMED MOHMED KEWEDAR</div><div class="c" style="left:914px;top:278px;width:69px;letter-spacing:-0.28px">LIFTING SUPERVISOR</div><div class="c" style="left:984px;top:278px;width:49px;letter-spacing:0.08px">03 Jan 2023</div><div class="c" style="left:1034px;top:278px;width:51px;letter-spacing:0.08px">02 Jan 2025</div><div class="c" style="left:1086px;top:278px;width:55px;letter-spacing:-0.12px">DONE</div><div class="c" style="left:1142px;top:278px;width:61px;letter-spacing:-0.12px">DONE</div><div class="c" style="left:1204px;top:278px;width:54px;letter-spacing:0.32px">ok</div><div class="c" style="left:1259px;top:278px;width:41px;letter-spacing:0.26px">20230802</div><svg class="da" style="left:328.6px;top:282px" width="5.600" height="3" viewBox="0 0 5.600 3"><path d="M0 0h5.600L2.800 3z"/></svg><svg class="da" style="left:719.6px;top:282px" width="5.600" height="3" viewBox="0 0 5.600 3"><path d="M0 0h5.600L2.800 3z"/></svg><div class="c" style="left:27px;top:291px;width:19px;letter-spacing:0.25px">8</div><div class="c" style="left:47px;top:291px;width:279px;letter-spacing:-0.29px">TOWER CRANE OPERATOR</div><div class="c" style="left:338px;top:291px;width:56px;letter-spacing:-0.01px">PIO/TEC036</div><div class="c" style="left:395px;top:291px;width:56px;letter-spacing:0.26px">213627</div><div class="c" style="left:452px;top:291px;width:71px;letter-spacing:0.26px">28335642123</div><div class="c" style="left:524px;top:291px;width:193px;letter-spacing:-0.23px">ABCO</div><div class="c l" style="left:731px;top:291px;width:182px;letter-spacing:-0.01px">GULAM MURTUZA GULAM RASOOL</div><div class="c" style="left:914px;top:291px;width:69px;letter-spacing:-0.35px">OPERATOR</div><div class="c" style="left:984px;top:291px;width:49px;letter-spacing:0.08px">01 Jan 2023</div><div class="c" style="left:1034px;top:291px;width:51px;letter-spacing:0.13px">31 Dec 2023</div><div class="c" style="left:1086px;top:291px;width:55px;letter-spacing:-0.12px">DONE</div><div class="c" style="left:1142px;top:291px;width:61px;letter-spacing:-0.12px">DONE</div><div class="c" style="left:1259px;top:291px;width:41px;letter-spacing:0.26px">20230801</div><svg class="da" style="left:328.6px;top:295px" width="5.600" height="3" viewBox="0 0 5.600 3"><path d="M0 0h5.600L2.800 3z"/></svg><svg class="da" style="left:719.6px;top:295px" width="5.600" height="3" viewBox="0 0 5.600 3"><path d="M0 0h5.600L2.800 3z"/></svg><div class="c" style="left:27px;top:304px;width:19px;letter-spacing:0.25px">9</div><div class="c" style="left:47px;top:304px;width:279px;letter-spacing:-0.09px">RIGGING AND SLINGING</div><div class="c" style="left:338px;top:304px;width:56px;letter-spacing:0.01px">PIO/HSE062</div><div class="c" style="left:395px;top:304px;width:56px;letter-spacing:0.26px">213628</div><div class="c" style="left:452px;top:304px;width:71px;letter-spacing:0.26px">28705030592</div><div class="c" style="left:524px;top:304px;width:193px;letter-spacing:-0.14px">QATAR TRADING &amp; CONTRACTING GROUP</div><div class="c l" style="left:731px;top:304px;width:182px;letter-spacing:0.12px">HABIBUR RAHMAN ALIM MUDDIN</div><div class="c" style="left:914px;top:304px;width:69px;letter-spacing:-0.39px">RIGGER</div><div class="c" style="left:984px;top:304px;width:49px;letter-spacing:0.08px">02 Jan 2023</div><div class="c" style="left:1034px;top:304px;width:51px;letter-spacing:0.08px">01 Jan 2025</div><div class="c" style="left:1086px;top:304px;width:55px;letter-spacing:-0.12px">DONE</div><div class="c" style="left:1142px;top:304px;width:61px;letter-spacing:-0.12px">DONE</div><div class="c" style="left:1204px;top:304px;width:54px;letter-spacing:-0.22px">OK</div><div class="c" style="left:1259px;top:304px;width:41px;letter-spacing:0.26px">20230802</div><svg class="da" style="left:328.6px;top:308px" width="5.600" height="3" viewBox="0 0 5.600 3"><path d="M0 0h5.600L2.800 3z"/></svg><svg class="da" style="left:719.6px;top:308px" width="5.600" height="3" viewBox="0 0 5.600 3"><path d="M0 0h5.600L2.800 3z"/></svg><div class="c" style="left:27px;top:317px;width:19px;letter-spacing:0.26px">10</div><div class="c" style="left:47px;top:317px;width:279px;letter-spacing:-0.09px">RIGGING AND SLINGING</div><div class="c" style="left:338px;top:317px;width:56px;letter-spacing:0.01px">PIO/HSE062</div><div class="c" style="left:395px;top:317px;width:56px;letter-spacing:0.26px">213629</div><div class="c" style="left:452px;top:317px;width:71px;letter-spacing:0.26px">28035648283</div><div class="c" style="left:524px;top:317px;width:193px;letter-spacing:-0.14px">QATAR TRADING &amp; CONTRACTING GROUP</div><div class="c l" style="left:731px;top:317px;width:182px;letter-spacing:-0.05px">RAVINDRA KUSHWAHA</div><div class="c" style="left:914px;top:317px;width:69px;letter-spacing:-0.39px">RIGGER</div><div class="c" style="left:984px;top:317px;width:49px;letter-spacing:0.08px">02 Jan 2023</div><div class="c" style="left:1034px;top:317px;width:51px;letter-spacing:0.08px">01 Jan 2025</div><div class="c" style="left:1086px;top:317px;width:55px;letter-spacing:-0.12px">DONE</div><div class="c" style="left:1142px;top:317px;width:61px;letter-spacing:-0.12px">DONE</div><div class="c" style="left:1204px;top:317px;width:54px;letter-spacing:-0.22px">OK</div><div class="c" style="left:1259px;top:317px;width:41px;letter-spacing:0.26px">20230802</div><svg class="da" style="left:328.6px;top:321px" width="5.600" height="3" viewBox="0 0 5.600 3"><path d="M0 0h5.600L2.800 3z"/></svg><svg class="da" style="left:719.6px;top:321px" width="5.600" height="3" viewBox="0 0 5.600 3"><path d="M0 0h5.600L2.800 3z"/></svg><div class="c" style="left:27px;top:330px;width:19px;letter-spacing:0.52px">11</div><div class="c" style="left:47px;top:330px;width:279px;letter-spacing:-0.34px">LORRY LOADER CRANE OPERATOR</div><div class="c" style="left:338px;top:330px;width:56px;letter-spacing:-0.01px">PIO/TEC023</div><div class="c" style="left:395px;top:330px;width:56px;letter-spacing:0.26px">213630</div><div class="c" style="left:452px;top:330px;width:71px;letter-spacing:0.3px">29105011663</div><div class="c" style="left:524px;top:330px;width:193px;letter-spacing:-0.14px">QATAR TRADING &amp; CONTRACTING GROUP</div><div class="c l" style="left:731px;top:330px;width:182px;letter-spacing:0.13px">AL AMIN MOZNU KHA</div><div class="c" style="left:914px;top:330px;width:69px;letter-spacing:-0.35px">OPERATOR</div><div class="c" style="left:984px;top:330px;width:49px;letter-spacing:0.08px">02 Jan 2023</div><div class="c" style="left:1034px;top:330px;width:51px;letter-spacing:0.08px">01 Jan 2024</div><div class="c" style="left:1086px;top:330px;width:55px;letter-spacing:-0.12px">DONE</div><div class="c" style="left:1142px;top:330px;width:61px;letter-spacing:-0.12px">DONE</div><div class="c" style="left:1204px;top:330px;width:54px;letter-spacing:-0.22px">OK</div><div class="c" style="left:1259px;top:330px;width:41px;letter-spacing:0.26px">20230802</div><svg class="da" style="left:328.6px;top:334px" width="5.600" height="3" viewBox="0 0 5.600 3"><path d="M0 0h5.600L2.800 3z"/></svg><svg class="da" style="left:719.6px;top:334px" width="5.600" height="3" viewBox="0 0 5.600 3"><path d="M0 0h5.600L2.800 3z"/></svg><div class="c" style="left:27px;top:343px;width:19px;letter-spacing:0.26px">12</div><div class="c" style="left:47px;top:343px;width:279px;letter-spacing:-0.34px">LORRY LOADER CRANE OPERATOR</div><div class="c" style="left:338px;top:343px;width:56px;letter-spacing:-0.01px">PIO/TEC023</div><div class="c" style="left:395px;top:343px;width:56px;letter-spacing:0.26px">213631</div><div class="c" style="left:452px;top:343px;width:71px;letter-spacing:0.26px">29105021931</div><div class="c" style="left:524px;top:343px;width:193px;letter-spacing:-0.14px">QATAR TRADING &amp; CONTRACTING GROUP</div><div class="c l" style="left:731px;top:343px;width:182px;letter-spacing:0.33px">MOHAMMAD MITHAN</div><div class="c" style="left:914px;top:343px;width:69px;letter-spacing:-0.35px">OPERATOR</div><div class="c" style="left:984px;top:343px;width:49px;letter-spacing:0.08px">02 Jan 2023</div><div class="c" style="left:1034px;top:343px;width:51px;letter-spacing:0.08px">01 Jan 2024</div><div class="c" style="left:1086px;top:343px;width:55px;letter-spacing:-0.12px">DONE</div><div class="c" style="left:1142px;top:343px;width:61px;letter-spacing:-0.12px">DONE</div><div class="c" style="left:1204px;top:343px;width:54px;letter-spacing:-0.22px">OK</div><div class="c" style="left:1259px;top:343px;width:41px;letter-spacing:0.26px">20230802</div><svg class="da" style="left:328.6px;top:347px" width="5.600" height="3" viewBox="0 0 5.600 3"><path d="M0 0h5.600L2.800 3z"/></svg><svg class="da" style="left:719.6px;top:347px" width="5.600" height="3" viewBox="0 0 5.600 3"><path d="M0 0h5.600L2.800 3z"/></svg><div class="c" style="left:27px;top:356px;width:19px;letter-spacing:0.26px">13</div><div class="c" style="left:47px;top:356px;width:279px;letter-spacing:-0.09px">RIGGING AND SLINGING</div><div class="c" style="left:338px;top:356px;width:56px;letter-spacing:0.01px">PIO/HSE062</div><div class="c" style="left:395px;top:356px;width:56px;letter-spacing:0.26px">213632</div><div class="c" style="left:452px;top:356px;width:71px;letter-spacing:0.19px">TBM 618</div><div class="c" style="left:524px;top:356px;width:193px;letter-spacing:-0.29px">TUNNELS BY MASTERS</div><div class="c l" style="left:731px;top:356px;width:182px;letter-spacing:0.03px">AMIT KUMAR SINGH</div><div class="c" style="left:914px;top:356px;width:69px;letter-spacing:-0.39px">RIGGER</div><div class="c" style="left:984px;top:356px;width:49px;letter-spacing:0.2px">31 Aug 2020</div><div class="c" style="left:1034px;top:356px;width:51px;letter-spacing:0.1px">01 Sep 2023</div><div class="c" style="left:1086px;top:356px;width:55px;letter-spacing:-0.12px">DONE</div><div class="c" style="left:1259px;top:356px;width:41px;letter-spacing:0.32px">20230811</div><svg class="da" style="left:328.6px;top:360px" width="5.600" height="3" viewBox="0 0 5.600 3"><path d="M0 0h5.600L2.800 3z"/></svg><svg class="da" style="left:719.6px;top:360px" width="5.600" height="3" viewBox="0 0 5.600 3"><path d="M0 0h5.600L2.800 3z"/></svg><div class="c" style="left:27px;top:369px;width:19px;letter-spacing:0.26px">14</div><div class="c" style="left:47px;top:369px;width:279px;letter-spacing:-0.27px">6G WELDER ASSESSMENT</div><div class="c" style="left:338px;top:369px;width:56px;letter-spacing:-0.01px">PIO/TEC041</div><div class="c" style="left:395px;top:369px;width:56px;letter-spacing:0.26px">213633</div><div class="c" style="left:452px;top:369px;width:71px;letter-spacing:0.19px">TBM 325</div><div class="c" style="left:524px;top:369px;width:193px;letter-spacing:-0.29px">TUNNELS BY MASTERS</div><div class="c l" style="left:731px;top:369px;width:182px;letter-spacing:0.07px">ANIL KUMAR MAHATO</div><div class="c" style="left:914px;top:369px;width:69px;letter-spacing:-0.29px">WELDER</div><div class="c" style="left:984px;top:369px;width:49px;letter-spacing:0.13px">11 Jan 2023</div><div class="c" style="left:1034px;top:369px;width:51px;letter-spacing:0.11px">10 Jul 2023</div><div class="c" style="left:1086px;top:369px;width:55px;letter-spacing:-0.12px">DONE</div><div class="c" style="left:1259px;top:369px;width:41px;letter-spacing:0.32px">20230811</div><svg class="da" style="left:328.6px;top:373px" width="5.600" height="3" viewBox="0 0 5.600 3"><path d="M0 0h5.600L2.800 3z"/></svg><svg class="da" style="left:719.6px;top:373px" width="5.600" height="3" viewBox="0 0 5.600 3"><path d="M0 0h5.600L2.800 3z"/></svg><div class="c" style="left:27px;top:382px;width:19px;letter-spacing:0.26px">15</div><div class="c" style="left:47px;top:382px;width:279px;letter-spacing:-0.31px">EXCAVATOR OPERATOR</div><div class="c" style="left:338px;top:382px;width:56px;letter-spacing:-0.01px">PIO/TEC016</div><div class="c" style="left:395px;top:382px;width:56px;letter-spacing:0.26px">213634</div><div class="c" style="left:524px;top:382px;width:193px;letter-spacing:-0.14px">QATAR TRADING &amp; CONTRACTING GROUP</div><div class="c l" style="left:731px;top:382px;width:182px;letter-spacing:-0.2px">RAJU PRASAD K. SHAW</div><div class="c" style="left:914px;top:382px;width:69px;letter-spacing:-0.35px">OPERATOR</div><div class="c" style="left:984px;top:382px;width:49px;letter-spacing:0.08px">05 Jan 2023</div><div class="c" style="left:1034px;top:382px;width:51px;letter-spacing:0.08px">04 Jan 2024</div><div class="c" style="left:1086px;top:382px;width:55px;letter-spacing:-0.12px">DONE</div><div class="c" style="left:1142px;top:382px;width:61px;letter-spacing:-0.12px">DONE</div><div class="c" style="left:1204px;top:382px;width:54px;letter-spacing:-0.22px">OK</div><div class="c" style="left:1259px;top:382px;width:41px;letter-spacing:0.26px">20230809</div><svg class="da" style="left:328.6px;top:386px" width="5.600" height="3" viewBox="0 0 5.600 3"><path d="M0 0h5.600L2.800 3z"/></svg><svg class="da" style="left:719.6px;top:386px" width="5.600" height="3" viewBox="0 0 5.600 3"><path d="M0 0h5.600L2.800 3z"/></svg><div class="c" style="left:27px;top:395px;width:19px;letter-spacing:0.26px">16</div><div class="c" style="left:47px;top:395px;width:279px;letter-spacing:-0.31px">SKID LOADER OPERATOR</div><div class="c" style="left:338px;top:395px;width:56px;letter-spacing:-0.01px">PIO/TEC033</div><div class="c" style="left:395px;top:395px;width:56px;letter-spacing:0.26px">213635</div><div class="c" style="left:524px;top:395px;width:193px;letter-spacing:-0.14px">QATAR TRADING &amp; CONTRACTING GROUP</div><div class="c l" style="left:731px;top:395px;width:182px;letter-spacing:-0.09px">PURNA B.B AHHETRI</div><div class="c" style="left:914px;top:395px;width:69px;letter-spacing:-0.35px">OPERATOR</div><div class="c" style="left:984px;top:395px;width:49px;letter-spacing:0.08px">05 Jan 2023</div><div class="c" style="left:1034px;top:395px;width:51px;letter-spacing:0.08px">04 Jan 2024</div><div class="c" style="left:1086px;top:395px;width:55px;letter-spacing:-0.12px">DONE</div><div class="c" style="left:1142px;top:395px;width:61px;letter-spacing:-0.12px">DONE</div><div class="c" style="left:1204px;top:395px;width:54px;letter-spacing:-0.22px">OK</div><div class="c" style="left:1259px;top:395px;width:41px;letter-spacing:0.26px">20230809</div><svg class="da" style="left:328.6px;top:399px" width="5.600" height="3" viewBox="0 0 5.600 3"><path d="M0 0h5.600L2.800 3z"/></svg><svg class="da" style="left:719.6px;top:399px" width="5.600" height="3" viewBox="0 0 5.600 3"><path d="M0 0h5.600L2.800 3z"/></svg><div class="c" style="left:27px;top:408px;width:19px;letter-spacing:0.26px">17</div><div class="c" style="left:47px;top:408px;width:279px;letter-spacing:-0.31px">EXCAVATOR OPERATOR</div><div class="c" style="left:338px;top:408px;width:56px;letter-spacing:-0.01px">PIO/TEC016</div><div class="c" style="left:395px;top:408px;width:56px;letter-spacing:0.26px">213636</div><div class="c" style="left:524px;top:408px;width:193px;letter-spacing:-0.14px">QATAR TRADING &amp; CONTRACTING GROUP</div><div class="c l" style="left:731px;top:408px;width:182px;letter-spacing:-0.16px">LALKU KUMAR SADAY</div><div class="c" style="left:914px;top:408px;width:69px;letter-spacing:-0.35px">OPERATOR</div><div class="c" style="left:984px;top:408px;width:49px;letter-spacing:0.08px">05 Jan 2023</div><div class="c" style="left:1034px;top:408px;width:51px;letter-spacing:0.08px">04 Jan 2024</div><div class="c" style="left:1086px;top:408px;width:55px;letter-spacing:-0.12px">DONE</div><div class="c" style="left:1142px;top:408px;width:61px;letter-spacing:-0.12px">DONE</div><div class="c" style="left:1204px;top:408px;width:54px;letter-spacing:-0.22px">OK</div><div class="c" style="left:1259px;top:408px;width:41px;letter-spacing:0.26px">20230809</div><svg class="da" style="left:328.6px;top:412px" width="5.600" height="3" viewBox="0 0 5.600 3"><path d="M0 0h5.600L2.800 3z"/></svg><svg class="da" style="left:719.6px;top:412px" width="5.600" height="3" viewBox="0 0 5.600 3"><path d="M0 0h5.600L2.800 3z"/></svg><div class="c" style="left:27px;top:421px;width:19px;letter-spacing:0.26px">18</div><div class="c" style="left:47px;top:421px;width:279px;letter-spacing:-0.28px">WHEEL LOADER OPERATOR</div><div class="c" style="left:338px;top:421px;width:56px;letter-spacing:-0.01px">PIO/TEC042</div><div class="c" style="left:395px;top:421px;width:56px;letter-spacing:0.26px">213637</div><div class="c" style="left:524px;top:421px;width:193px;letter-spacing:-0.14px">QATAR TRADING &amp; CONTRACTING GROUP</div><div class="c l" style="left:731px;top:421px;width:182px;letter-spacing:0.09px">RAM JIWAN MANDAL</div><div class="c" style="left:914px;top:421px;width:69px;letter-spacing:-0.35px">OPERATOR</div><div class="c" style="left:984px;top:421px;width:49px;letter-spacing:0.08px">05 Jan 2023</div><div class="c" style="left:1034px;top:421px;width:51px;letter-spacing:0.08px">04 Jan 2024</div><div class="c" style="left:1086px;top:421px;width:55px;letter-spacing:-0.12px">DONE</div><div class="c" style="left:1142px;top:421px;width:61px;letter-spacing:-0.12px">DONE</div><div class="c" style="left:1204px;top:421px;width:54px;letter-spacing:-0.22px">OK</div><div class="c" style="left:1259px;top:421px;width:41px;letter-spacing:0.26px">20230809</div><svg class="da" style="left:328.6px;top:425px" width="5.600" height="3" viewBox="0 0 5.600 3"><path d="M0 0h5.600L2.800 3z"/></svg><svg class="da" style="left:719.6px;top:425px" width="5.600" height="3" viewBox="0 0 5.600 3"><path d="M0 0h5.600L2.800 3z"/></svg><div class="c" style="left:27px;top:434px;width:19px;letter-spacing:0.26px">19</div><div class="c" style="left:47px;top:434px;width:279px;letter-spacing:-0.31px">SKID LOADER OPERATOR</div><div class="c" style="left:338px;top:434px;width:56px;letter-spacing:-0.01px">PIO/TEC033</div><div class="c" style="left:395px;top:434px;width:56px;letter-spacing:0.26px">213638</div><div class="c" style="left:524px;top:434px;width:193px;letter-spacing:-0.14px">QATAR TRADING &amp; CONTRACTING GROUP</div><div class="c l" style="left:731px;top:434px;width:182px;letter-spacing:-0.28px">MUKESH DARJEE</div><div class="c" style="left:914px;top:434px;width:69px;letter-spacing:-0.35px">OPERATOR</div><div class="c" style="left:984px;top:434px;width:49px;letter-spacing:0.08px">05 Jan 2023</div><div class="c" style="left:1034px;top:434px;width:51px;letter-spacing:0.08px">04 Jan 2024</div><div class="c" style="left:1086px;top:434px;width:55px;letter-spacing:-0.12px">DONE</div><div class="c" style="left:1142px;top:434px;width:61px;letter-spacing:-0.12px">DONE</div><div class="c" style="left:1204px;top:434px;width:54px;letter-spacing:-0.22px">OK</div><div class="c" style="left:1259px;top:434px;width:41px;letter-spacing:0.26px">20230809</div><svg class="da" style="left:328.6px;top:438px" width="5.600" height="3" viewBox="0 0 5.600 3"><path d="M0 0h5.600L2.800 3z"/></svg><svg class="da" style="left:719.6px;top:438px" width="5.600" height="3" viewBox="0 0 5.600 3"><path d="M0 0h5.600L2.800 3z"/></svg><div class="c" style="left:27px;top:447px;width:19px;letter-spacing:0.26px">20</div><div class="c" style="left:47px;top:447px;width:279px;letter-spacing:-0.31px">EXCAVATOR OPERATOR</div><div class="c" style="left:338px;top:447px;width:56px;letter-spacing:-0.01px">PIO/TEC016</div><div class="c" style="left:395px;top:447px;width:56px;letter-spacing:0.26px">213639</div><div class="c" style="left:524px;top:447px;width:193px;letter-spacing:-0.14px">QATAR TRADING &amp; CONTRACTING GROUP</div><div class="c l" style="left:731px;top:447px;width:182px;letter-spacing:-0.03px">MOHAN LAL K. SINGH</div><div class="c" style="left:914px;top:447px;width:69px;letter-spacing:-0.35px">OPERATOR</div><div class="c" style="left:984px;top:447px;width:49px;letter-spacing:0.08px">05 Jan 2023</div><div class="c" style="left:1034px;top:447px;width:51px;letter-spacing:0.08px">04 Jan 2024</div><div class="c" style="left:1086px;top:447px;width:55px;letter-spacing:-0.12px">DONE</div><div class="c" style="left:1142px;top:447px;width:61px;letter-spacing:-0.12px">DONE</div><div class="c" style="left:1204px;top:447px;width:54px;letter-spacing:-0.22px">OK</div><div class="c" style="left:1259px;top:447px;width:41px;letter-spacing:0.26px">20230809</div><svg class="da" style="left:328.6px;top:451px" width="5.600" height="3" viewBox="0 0 5.600 3"><path d="M0 0h5.600L2.800 3z"/></svg><svg class="da" style="left:719.6px;top:451px" width="5.600" height="3" viewBox="0 0 5.600 3"><path d="M0 0h5.600L2.800 3z"/></svg><div class="c" style="left:27px;top:460px;width:19px;letter-spacing:0.26px">21</div><div class="c" style="left:47px;top:460px;width:279px;letter-spacing:-0.33px">FORKLIFT OPERATOR</div><div class="c" style="left:338px;top:460px;width:56px;letter-spacing:-0.01px">PIO/TEC019</div><div class="c" style="left:395px;top:460px;width:56px;letter-spacing:0.26px">213640</div><div class="c" style="left:524px;top:460px;width:193px;letter-spacing:-0.14px">QATAR TRADING &amp; CONTRACTING GROUP</div><div class="c l" style="left:731px;top:460px;width:182px;letter-spacing:-0.06px">SHRAWAN KUMAR GAONR</div><div class="c" style="left:914px;top:460px;width:69px;letter-spacing:-0.35px">OPERATOR</div><div class="c" style="left:984px;top:460px;width:49px;letter-spacing:0.08px">05 Jan 2023</div><div class="c" style="left:1034px;top:460px;width:51px;letter-spacing:0.08px">04 Jan 2024</div><div class="c" style="left:1086px;top:460px;width:55px;letter-spacing:-0.12px">DONE</div><div class="c" style="left:1142px;top:460px;width:61px;letter-spacing:-0.12px">DONE</div><div class="c" style="left:1204px;top:460px;width:54px;letter-spacing:-0.22px">OK</div><div class="c" style="left:1259px;top:460px;width:41px;letter-spacing:0.26px">20230809</div><svg class="da" style="left:328.6px;top:464px" width="5.600" height="3" viewBox="0 0 5.600 3"><path d="M0 0h5.600L2.800 3z"/></svg><svg class="da" style="left:719.6px;top:464px" width="5.600" height="3" viewBox="0 0 5.600 3"><path d="M0 0h5.600L2.800 3z"/></svg><div class="c" style="left:27px;top:473px;width:19px;letter-spacing:0.26px">22</div><div class="c" style="left:47px;top:473px;width:279px;letter-spacing:-0.23px">MOBILE CRANE OPERATOR</div><div class="c" style="left:338px;top:473px;width:56px;letter-spacing:-0.01px">PIO/TEC025</div><div class="c" style="left:395px;top:473px;width:56px;letter-spacing:0.26px">213641</div><div class="c" style="left:524px;top:473px;width:193px;letter-spacing:-0.14px">QATAR TRADING &amp; CONTRACTING GROUP</div><div class="c l" style="left:731px;top:473px;width:182px;letter-spacing:-0.02px">CHANDANA AJITH</div><div class="c" style="left:914px;top:473px;width:69px;letter-spacing:-0.35px">OPERATOR</div><div class="c" style="left:984px;top:473px;width:49px;letter-spacing:0.08px">05 Jan 2023</div><div class="c" style="left:1034px;top:473px;width:51px;letter-spacing:0.08px">04 Jan 2024</div><div class="c" style="left:1086px;top:473px;width:55px;letter-spacing:-0.12px">DONE</div><div class="c" style="left:1142px;top:473px;width:61px;letter-spacing:-0.12px">DONE</div><div class="c" style="left:1204px;top:473px;width:54px;letter-spacing:-0.22px">OK</div><div class="c" style="left:1259px;top:473px;width:41px;letter-spacing:0.26px">20230809</div><svg class="da" style="left:328.6px;top:477px" width="5.600" height="3" viewBox="0 0 5.600 3"><path d="M0 0h5.600L2.800 3z"/></svg><svg class="da" style="left:719.6px;top:477px" width="5.600" height="3" viewBox="0 0 5.600 3"><path d="M0 0h5.600L2.800 3z"/></svg><div class="c" style="left:27px;top:486px;width:19px;letter-spacing:0.26px">23</div><div class="c" style="left:47px;top:486px;width:279px;letter-spacing:-0.23px">MOBILE CRANE OPERATOR</div><div class="c" style="left:338px;top:486px;width:56px;letter-spacing:-0.01px">PIO/TEC025</div><div class="c" style="left:395px;top:486px;width:56px;letter-spacing:0.26px">213642</div><div class="c" style="left:524px;top:486px;width:193px;letter-spacing:-0.14px">QATAR TRADING &amp; CONTRACTING GROUP</div><div class="c l" style="left:731px;top:486px;width:182px;letter-spacing:-0.06px">MANJU SRI VIDANA V. ARACHCHI</div><div class="c" style="left:914px;top:486px;width:69px;letter-spacing:-0.35px">OPERATOR</div><div class="c" style="left:984px;top:486px;width:49px;letter-spacing:0.08px">05 Jan 2023</div><div class="c" style="left:1034px;top:486px;width:51px;letter-spacing:0.08px">04 Jan 2024</div><div class="c" style="left:1086px;top:486px;width:55px;letter-spacing:-0.12px">DONE</div><div class="c" style="left:1142px;top:486px;width:61px;letter-spacing:-0.12px">DONE</div><div class="c" style="left:1204px;top:486px;width:54px;letter-spacing:-0.22px">OK</div><div class="c" style="left:1259px;top:486px;width:41px;letter-spacing:0.26px">20230809</div><svg class="da" style="left:328.6px;top:490px" width="5.600" height="3" viewBox="0 0 5.600 3"><path d="M0 0h5.600L2.800 3z"/></svg><svg class="da" style="left:719.6px;top:490px" width="5.600" height="3" viewBox="0 0 5.600 3"><path d="M0 0h5.600L2.800 3z"/></svg><div class="c" style="left:27px;top:499px;width:19px;letter-spacing:0.26px">24</div><div class="c" style="left:47px;top:499px;width:279px;letter-spacing:-0.33px">TRENCH OPERATOR</div><div class="c" style="left:338px;top:499px;width:56px;letter-spacing:-0.01px">PIO/TEC038</div><div class="c" style="left:395px;top:499px;width:56px;letter-spacing:0.26px">213643</div><div class="c" style="left:524px;top:499px;width:193px;letter-spacing:-0.14px">QATAR TRADING &amp; CONTRACTING GROUP</div><div class="c l" style="left:731px;top:499px;width:182px;letter-spacing:0.06px">RISHIMUNI RAM NAGINA</div><div class="c" style="left:914px;top:499px;width:69px;letter-spacing:-0.35px">OPERATOR</div><div class="c" style="left:984px;top:499px;width:49px;letter-spacing:0.08px">05 Jan 2023</div><div class="c" style="left:1034px;top:499px;width:51px;letter-spacing:0.08px">04 Jan 2024</div><div class="c" style="left:1086px;top:499px;width:55px;letter-spacing:-0.12px">DONE</div><div class="c" style="left:1142px;top:499px;width:61px;letter-spacing:-0.12px">DONE</div><div class="c" style="left:1204px;top:499px;width:54px;letter-spacing:-0.22px">OK</div><div class="c" style="left:1259px;top:499px;width:41px;letter-spacing:0.26px">20230809</div><svg class="da" style="left:328.6px;top:503px" width="5.600" height="3" viewBox="0 0 5.600 3"><path d="M0 0h5.600L2.800 3z"/></svg><svg class="da" style="left:719.6px;top:503px" width="5.600" height="3" viewBox="0 0 5.600 3"><path d="M0 0h5.600L2.800 3z"/></svg><div class="c" style="left:27px;top:512px;width:19px;letter-spacing:0.26px">25</div><div class="c" style="left:47px;top:512px;width:279px;letter-spacing:-0.33px">TRENCH OPERATOR</div><div class="c" style="left:338px;top:512px;width:56px;letter-spacing:-0.01px">PIO/TEC038</div><div class="c" style="left:395px;top:512px;width:56px;letter-spacing:0.26px">213644</div><div class="c" style="left:524px;top:512px;width:193px;letter-spacing:-0.14px">QATAR TRADING &amp; CONTRACTING GROUP</div><div class="c l" style="left:731px;top:512px;width:182px;letter-spacing:0.15px">BIMAL LIMBU</div><div class="c" style="left:914px;top:512px;width:69px;letter-spacing:-0.35px">OPERATOR</div><div class="c" style="left:984px;top:512px;width:49px;letter-spacing:0.08px">05 Jan 2023</div><div class="c" style="left:1034px;top:512px;width:51px;letter-spacing:0.08px">04 Jan 2024</div><div class="c" style="left:1086px;top:512px;width:55px;letter-spacing:-0.12px">DONE</div><div class="c" style="left:1142px;top:512px;width:61px;letter-spacing:-0.12px">DONE</div><div class="c" style="left:1204px;top:512px;width:54px;letter-spacing:-0.22px">OK</div><div class="c" style="left:1259px;top:512px;width:41px;letter-spacing:0.26px">20230809</div><svg class="da" style="left:328.6px;top:516px" width="5.600" height="3" viewBox="0 0 5.600 3"><path d="M0 0h5.600L2.800 3z"/></svg><svg class="da" style="left:719.6px;top:516px" width="5.600" height="3" viewBox="0 0 5.600 3"><path d="M0 0h5.600L2.800 3z"/></svg><div class="c" style="left:27px;top:525px;width:19px;letter-spacing:0.26px">26</div><div class="c" style="left:47px;top:525px;width:279px;letter-spacing:-0.28px">WHEEL LOADER OPERATOR</div><div class="c" style="left:338px;top:525px;width:56px;letter-spacing:-0.01px">PIO/TEC042</div><div class="c" style="left:395px;top:525px;width:56px;letter-spacing:0.26px">213645</div><div class="c" style="left:524px;top:525px;width:193px;letter-spacing:-0.14px">QATAR TRADING &amp; CONTRACTING GROUP</div><div class="c l" style="left:731px;top:525px;width:182px;letter-spacing:-0.25px">GURDEEP SINGH</div><div class="c" style="left:914px;top:525px;width:69px;letter-spacing:-0.35px">OPERATOR</div><div class="c" style="left:984px;top:525px;width:49px;letter-spacing:0.08px">05 Jan 2023</div><div class="c" style="left:1034px;top:525px;width:51px;letter-spacing:0.08px">04 Jan 2024</div><div class="c" style="left:1086px;top:525px;width:55px;letter-spacing:-0.12px">DONE</div><div class="c" style="left:1142px;top:525px;width:61px;letter-spacing:-0.12px">DONE</div><div class="c" style="left:1204px;top:525px;width:54px;letter-spacing:-0.22px">OK</div><div class="c" style="left:1259px;top:525px;width:41px;letter-spacing:0.26px">20230809</div><svg class="da" style="left:328.6px;top:529px" width="5.600" height="3" viewBox="0 0 5.600 3"><path d="M0 0h5.600L2.800 3z"/></svg><svg class="da" style="left:719.6px;top:529px" width="5.600" height="3" viewBox="0 0 5.600 3"><path d="M0 0h5.600L2.800 3z"/></svg><div class="c" style="left:27px;top:538px;width:19px;letter-spacing:0.26px">27</div><div class="c" style="left:47px;top:538px;width:279px;letter-spacing:-0.28px">WHEEL LOADER OPERATOR</div><div class="c" style="left:338px;top:538px;width:56px;letter-spacing:-0.01px">PIO/TEC042</div><div class="c" style="left:395px;top:538px;width:56px;letter-spacing:0.26px">213646</div><div class="c" style="left:524px;top:538px;width:193px;letter-spacing:-0.14px">QATAR TRADING &amp; CONTRACTING GROUP</div><div class="c l" style="left:731px;top:538px;width:182px;letter-spacing:-0.16px">RAM KAFLE</div><div class="c" style="left:914px;top:538px;width:69px;letter-spacing:-0.35px">OPERATOR</div><div class="c" style="left:984px;top:538px;width:49px;letter-spacing:0.08px">05 Jan 2023</div><div class="c" style="left:1034px;top:538px;width:51px;letter-spacing:0.08px">04 Jan 2024</div><div class="c" style="left:1086px;top:538px;width:55px;letter-spacing:-0.12px">DONE</div><div class="c" style="left:1142px;top:538px;width:61px;letter-spacing:-0.12px">DONE</div><div class="c" style="left:1204px;top:538px;width:54px;letter-spacing:-0.22px">OK</div><div class="c" style="left:1259px;top:538px;width:41px;letter-spacing:0.26px">20230809</div><svg class="da" style="left:328.6px;top:542px" width="5.600" height="3" viewBox="0 0 5.600 3"><path d="M0 0h5.600L2.800 3z"/></svg><svg class="da" style="left:719.6px;top:542px" width="5.600" height="3" viewBox="0 0 5.600 3"><path d="M0 0h5.600L2.800 3z"/></svg><div class="c" style="left:27px;top:551px;width:19px;letter-spacing:0.26px">28</div><div class="c" style="left:47px;top:551px;width:279px;letter-spacing:-0.28px">WHEEL LOADER OPERATOR</div><div class="c" style="left:338px;top:551px;width:56px;letter-spacing:-0.01px">PIO/TEC042</div><div class="c" style="left:395px;top:551px;width:56px;letter-spacing:0.26px">213647</div><div class="c" style="left:524px;top:551px;width:193px;letter-spacing:-0.14px">QATAR TRADING &amp; CONTRACTING GROUP</div><div class="c l" style="left:731px;top:551px;width:182px;letter-spacing:-0.06px">SHIVA KUMAR GUPTA</div><div class="c" style="left:914px;top:551px;width:69px;letter-spacing:-0.35px">OPERATOR</div><div class="c" style="left:984px;top:551px;width:49px;letter-spacing:0.08px">05 Jan 2023</div><div class="c" style="left:1034px;top:551px;width:51px;letter-spacing:0.08px">04 Jan 2024</div><div class="c" style="left:1086px;top:551px;width:55px;letter-spacing:-0.12px">DONE</div><div class="c" style="left:1142px;top:551px;width:61px;letter-spacing:-0.12px">DONE</div><div class="c" style="left:1204px;top:551px;width:54px;letter-spacing:-0.22px">OK</div><div class="c" style="left:1259px;top:551px;width:41px;letter-spacing:0.26px">20230809</div><svg class="da" style="left:328.6px;top:555px" width="5.600" height="3" viewBox="0 0 5.600 3"><path d="M0 0h5.600L2.800 3z"/></svg><svg class="da" style="left:719.6px;top:555px" width="5.600" height="3" viewBox="0 0 5.600 3"><path d="M0 0h5.600L2.800 3z"/></svg><div class="c" style="left:27px;top:564px;width:19px;letter-spacing:0.26px">29</div><div class="c" style="left:47px;top:564px;width:279px;letter-spacing:-0.28px">WHEEL LOADER OPERATOR</div><div class="c" style="left:338px;top:564px;width:56px;letter-spacing:-0.01px">PIO/TEC042</div><div class="c" style="left:395px;top:564px;width:56px;letter-spacing:0.26px">213648</div><div class="c" style="left:524px;top:564px;width:193px;letter-spacing:-0.14px">QATAR TRADING &amp; CONTRACTING GROUP</div><div class="c l" style="left:731px;top:564px;width:182px;letter-spacing:-0.05px">BRAHAM DEV YADAV</div><div class="c" style="left:914px;top:564px;width:69px;letter-spacing:-0.35px">OPERATOR</div><div class="c" style="left:984px;top:564px;width:49px;letter-spacing:0.08px">05 Jan 2023</div><div class="c" style="left:1034px;top:564px;width:51px;letter-spacing:0.08px">04 Jan 2024</div><div class="c" style="left:1086px;top:564px;width:55px;letter-spacing:-0.12px">DONE</div><div class="c" style="left:1142px;top:564px;width:61px;letter-spacing:-0.12px">DONE</div><div class="c" style="left:1204px;top:564px;width:54px;letter-spacing:-0.22px">OK</div><div class="c" style="left:1259px;top:564px;width:41px;letter-spacing:0.26px">20230809</div><svg class="da" style="left:328.6px;top:568px" width="5.600" height="3" viewBox="0 0 5.600 3"><path d="M0 0h5.600L2.800 3z"/></svg><svg class="da" style="left:719.6px;top:568px" width="5.600" height="3" viewBox="0 0 5.600 3"><path d="M0 0h5.600L2.800 3z"/></svg><div class="c" style="left:27px;top:577px;width:19px;letter-spacing:0.26px">30</div><div class="c" style="left:47px;top:577px;width:279px;letter-spacing:-0.28px">WHEEL LOADER OPERATOR</div><div class="c" style="left:338px;top:577px;width:56px;letter-spacing:-0.01px">PIO/TEC042</div><div class="c" style="left:395px;top:577px;width:56px;letter-spacing:0.26px">213649</div><div class="c" style="left:524px;top:577px;width:193px;letter-spacing:-0.14px">QATAR TRADING &amp; CONTRACTING GROUP</div><div class="c l" style="left:731px;top:577px;width:182px;letter-spacing:-0.1px">PANKAJ KUMAR</div><div class="c" style="left:914px;top:577px;width:69px;letter-spacing:-0.35px">OPERATOR</div><div class="c" style="left:984px;top:577px;width:49px;letter-spacing:0.08px">05 Jan 2023</div><div class="c" style="left:1034px;top:577px;width:51px;letter-spacing:0.08px">04 Jan 2024</div><div class="c" style="left:1086px;top:577px;width:55px;letter-spacing:-0.12px">DONE</div><div class="c" style="left:1142px;top:577px;width:61px;letter-spacing:-0.12px">DONE</div><div class="c" style="left:1204px;top:577px;width:54px;letter-spacing:-0.22px">OK</div><div class="c" style="left:1259px;top:577px;width:41px;letter-spacing:0.26px">20230809</div><svg class="da" style="left:328.6px;top:581px" width="5.600" height="3" viewBox="0 0 5.600 3"><path d="M0 0h5.600L2.800 3z"/></svg><svg class="da" style="left:719.6px;top:581px" width="5.600" height="3" viewBox="0 0 5.600 3"><path d="M0 0h5.600L2.800 3z"/></svg><div class="c" style="left:27px;top:590px;width:19px;letter-spacing:0.26px">31</div><div class="c" style="left:47px;top:590px;width:279px;letter-spacing:-0.31px">BACKHOE LOADER OPERATOR</div><div class="c" style="left:338px;top:590px;width:56px;letter-spacing:-0.01px">PIO/TEC002</div><div class="c" style="left:395px;top:590px;width:56px;letter-spacing:0.26px">213650</div><div class="c" style="left:524px;top:590px;width:193px;letter-spacing:-0.14px">QATAR TRADING &amp; CONTRACTING GROUP</div><div class="c l" style="left:731px;top:590px;width:182px;letter-spacing:-0.09px">VIJAYA KUMAR HARINDER KUMAR</div><div class="c" style="left:914px;top:590px;width:69px;letter-spacing:-0.35px">OPERATOR</div><div class="c" style="left:984px;top:590px;width:49px;letter-spacing:0.08px">05 Jan 2023</div><div class="c" style="left:1034px;top:590px;width:51px;letter-spacing:0.08px">04 Jan 2024</div><div class="c" style="left:1086px;top:590px;width:55px;letter-spacing:-0.12px">DONE</div><div class="c" style="left:1142px;top:590px;width:61px;letter-spacing:-0.12px">DONE</div><div class="c" style="left:1204px;top:590px;width:54px;letter-spacing:-0.22px">OK</div><div class="c" style="left:1259px;top:590px;width:41px;letter-spacing:0.26px">20230809</div><svg class="da" style="left:328.6px;top:594px" width="5.600" height="3" viewBox="0 0 5.600 3"><path d="M0 0h5.600L2.800 3z"/></svg><svg class="da" style="left:719.6px;top:594px" width="5.600" height="3" viewBox="0 0 5.600 3"><path d="M0 0h5.600L2.800 3z"/></svg><div class="hl" style="left:26px;top:211px;width:1276px;height:1px"></div><div class="hl" style="left:26px;top:224px;width:1276px;height:1px"></div><div class="hl" style="left:26px;top:237px;width:1276px;height:1px"></div><div class="hl" style="left:26px;top:250px;width:1276px;height:1px"></div><div class="hl" style="left:26px;top:263px;width:1276px;height:1px"></div><div class="hl" style="left:26px;top:276px;width:1276px;height:1px"></div><div class="hl" style="left:26px;top:289px;width:1276px;height:1px"></div><div class="hl" style="left:26px;top:302px;width:1276px;height:1px"></div><div class="hl" style="left:26px;top:315px;width:1276px;height:1px"></div><div class="hl" style="left:26px;top:328px;width:1276px;height:1px"></div><div class="hl" style="left:26px;top:341px;width:1276px;height:1px"></div><div class="hl" style="left:26px;top:354px;width:1276px;height:1px"></div><div class="hl" style="left:26px;top:367px;width:1276px;height:1px"></div><div class="hl" style="left:26px;top:380px;width:1276px;height:1px"></div><div class="hl" style="left:26px;top:393px;width:1276px;height:1px"></div><div class="hl" style="left:26px;top:406px;width:1276px;height:1px"></div><div class="hl" style="left:26px;top:419px;width:1276px;height:1px"></div><div class="hl" style="left:26px;top:432px;width:1276px;height:1px"></div><div class="hl" style="left:26px;top:445px;width:1276px;height:1px"></div><div class="hl" style="left:26px;top:458px;width:1276px;height:1px"></div><div class="hl" style="left:26px;top:471px;width:1276px;height:1px"></div><div class="hl" style="left:26px;top:484px;width:1276px;height:1px"></div><div class="hl" style="left:26px;top:497px;width:1276px;height:1px"></div><div class="hl" style="left:26px;top:510px;width:1276px;height:1px"></div><div class="hl" style="left:26px;top:523px;width:1276px;height:1px"></div><div class="hl" style="left:26px;top:536px;width:1276px;height:1px"></div><div class="hl" style="left:26px;top:549px;width:1276px;height:1px"></div><div class="hl" style="left:26px;top:562px;width:1276px;height:1px"></div><div class="hl" style="left:26px;top:575px;width:1276px;height:1px"></div><div class="hl" style="left:26px;top:588px;width:1276px;height:1px"></div><div class="hl" style="left:26px;top:601px;width:1276px;height:1px"></div><div class="hl" style="left:46px;top:178px;width:1px;height:428px"></div><div class="hl" style="left:337px;top:178px;width:1px;height:428px"></div><div class="hl" style="left:394px;top:178px;width:1px;height:428px"></div><div class="hl" style="left:451px;top:178px;width:1px;height:428px"></div><div class="hl" style="left:523px;top:178px;width:1px;height:428px"></div><div class="hl" style="left:728px;top:178px;width:1px;height:428px"></div><div class="hl" style="left:913px;top:178px;width:1px;height:428px"></div><div class="hl" style="left:983px;top:178px;width:1px;height:428px"></div><div class="hl" style="left:1033px;top:178px;width:1px;height:428px"></div><div class="hl" style="left:1085px;top:178px;width:1px;height:428px"></div><div class="hl" style="left:1141px;top:178px;width:1px;height:428px"></div><div class="hl" style="left:1203px;top:178px;width:1px;height:428px"></div><div class="hl" style="left:1258px;top:178px;width:1px;height:428px"></div><div style="left:26px;top:178px;width:1276px;height:1px;background:#2f7b5f"></div><div style="left:26px;top:179px;width:1276px;height:1px;background:#5f8fa6"></div><div style="left:26px;top:178px;width:1px;height:428px;background:#1e6b47"></div><div style="left:1300px;top:178px;width:2px;height:428px;background:#12402b"></div><div class="hl" style="left:26px;top:196px;width:1276px;height:1px"></div><div style="left:0;top:197px;width:1301px;height:2px;background:#c0c0c0"></div><div style="left:1258px;top:99px;width:43px;height:15px;border:1.5px solid #1a56c4;box-sizing:border-box"></div><div style="left:1299px;top:112px;width:6px;height:6px;border-radius:3px;background:#1a56c4"></div><div style="left:0;top:606px;width:1315px;height:9px;background:#fff"></div><div style="left:0;top:606px;width:26px;height:9px;background:#f1f3f4"></div><div style="left:0;top:615px;width:1315px;height:1px;background:#e0e3e7"></div><div style="left:0;top:616px;width:1315px;height:27px;background:#f9fbfd"></div><div style="left:1292px;top:606px;width:1px;height:9px;background:#e3e3e3"></div><div style="left:1303px;top:606px;width:1px;height:9px;background:#e3e3e3"></div><div style="left:1296.5px;top:607.5px;width:0;height:0;border-top:2.5px solid transparent;border-bottom:2.5px solid transparent;border-right:3px solid #b0b0b0"></div><div style="left:1308.5px;top:607.5px;width:0;height:0;border-top:2.5px solid transparent;border-bottom:2.5px solid transparent;border-left:3px solid #b0b0b0"></div><div style="left:675px;top:616px;width:199px;height:27px;background:#e1e9f7"></div><div style="left:187px;top:641px;width:99px;height:2px;background:#a8c1ee"></div><div class="t" style="left:111.7px;top:620.5px;height:20px;line-height:20px;font-size:10.3px;letter-spacing:-0.232px;font-weight:400;color:#444746;">COURSES</div><div class="t" style="left:196.7px;top:620.5px;height:20px;line-height:20px;font-size:10.3px;letter-spacing:0.063px;font-weight:400;color:#444746;">DASHBOARD</div><div class="t" style="left:297.5px;top:620.5px;height:20px;line-height:20px;font-size:10.3px;letter-spacing:0.147px;font-weight:400;color:#444746;">HSE STUDENT DATABASE 2021</div><div class="t" style="left:490.7px;top:620.5px;height:20px;line-height:20px;font-size:10.3px;letter-spacing:0.191px;font-weight:400;color:#444746;">HSE STUDENT DATABASE 2022</div><div class="t" style="left:685.5px;top:620.5px;height:20px;line-height:20px;font-size:10.3px;letter-spacing:0.261px;font-weight:700;color:#1a56c4;">HSE STUDENT DATABASE 2023</div><div class="tc" style="left:170px;top:628.8px"></div><div class="tc" style="left:271.5px;top:628.8px"></div><div class="tc" style="left:465px;top:628.8px"></div><div class="tc" style="left:659.5px;top:628.8px"></div><div class="tc" style="left:858.5px;top:628.8px;border-top-color:#1a56c4"></div><div style="left:42.5px;top:629.9px;width:7.4px;height:1.2px;background:#444746"></div><div style="left:45.6px;top:626.8px;width:1.2px;height:7.4px;background:#444746"></div><div style="left:71.3px;top:627.2px;width:10.6px;height:1.5px;background:#444746"></div><div style="left:71.3px;top:630.0px;width:10.6px;height:1.5px;background:#444746"></div><div style="left:71.3px;top:632.8px;width:10.6px;height:1.5px;background:#444746"></div><svg style="left:25.25px;top:57.25px" width="13.5" height="13.5" viewBox="0 0 24 24"><path d="M15.5 14h-.79l-.28-.27C15.41 12.59 16 11.11 16 9.5 16 5.91 13.09 3 9.5 3S3 5.91 3 9.5 5.91 16 9.5 16c1.61 0 3.09-.59 4.23-1.57l.27.28v.79l5 4.99L20.49 19l-4.99-5zm-6 0C7.01 14 5 11.99 5 9.5S7.01 5 9.5 5 14 7.01 14 9.5 11.99 14 9.5 14z" fill="#444746" stroke="#444746" stroke-width="0.35" /></svg><svg style="left:99.70px;top:56.70px" width="14.6" height="14.6" viewBox="0 0 24 24"><path d="M7 19v-2h7.1q1.575 0 2.737-1T18 13.5q0-1.5-1.163-2.5T14.1 10H7.8l2.6 2.6L9 14 4 9l5-5 1.4 1.4L7.8 8h6.3q2.425 0 4.163 1.575T20 13.5q0 2.35-1.737 3.925T14.1 19z" fill="#444746" stroke="#444746" stroke-width="0.35" /></svg><svg style="left:123.70px;top:56.70px" width="14.6" height="14.6" viewBox="0 0 24 24"><path d="M9.9 19q-2.425 0-4.163-1.575T4 13.5q0-2.35 1.737-3.925T9.9 8h6.3l-2.6-2.6L15 4l5 5-5 5-1.4-1.4 2.6-2.6H9.9q-1.575 0-2.737 1T6 13.5q0 1.5 1.163 2.5T9.9 17H17v2z" fill="#444746" stroke="#444746" stroke-width="0.35" /></svg><svg style="left:148.70px;top:57.00px" width="14.6" height="14.6" viewBox="0 0 24 24"><path d="M19 8h-1V3H6v5H5c-1.66 0-3 1.34-3 3v6h4v4h12v-4h4v-6c0-1.66-1.34-3-3-3zM8 5h8v3H8V5zm8 14H8v-4h8v4zm4-4h-2v-2H6v2H4v-4c0-.55.45-1 1-1h14c.55 0 1 .45 1 1v4z M18 10.500a1 1 0 1 0 0 2a1 1 0 1 0 0-2z" fill="#444746" stroke="#444746" stroke-width="0.35" /></svg><svg style="left:172.30px;top:57.50px" width="14.6" height="14.6" viewBox="0 0 24 24"><path d="M18 4V3c0-.55-.45-1-1-1H5c-.55 0-1 .45-1 1v4c0 .55.45 1 1 1h12c.55 0 1-.45 1-1V6h1v4H9v11c0 .55.45 1 1 1h2c.55 0 1-.45 1-1v-9h8V4h-3zm-2 2H6V4h10v2z M11 12h0z" fill="#444746" stroke="#444746" stroke-width="0.35" /></svg><div class="t" style="left:311.8px;top:52.0px;height:20px;line-height:20px;font-size:10px;letter-spacing:-0.572px;font-weight:700;color:#444746;">.0</div><svg style="left:318.2px;top:65.4px" width="6" height="4.6" viewBox="0 0 7 5"><path d="M0 2.500L2.500 0v1.900H7v1.200H2.500V5z" fill="#444746"/></svg><div class="t" style="left:336.6px;top:52.0px;height:20px;line-height:20px;font-size:10px;letter-spacing:-0.635px;font-weight:700;color:#444746;">.00</div><svg style="left:342.3px;top:65.8px" width="6" height="4.6" viewBox="0 0 7 5"><path d="M7 2.500L4.500 0v1.900H0v1.200h4.500V5z" fill="#444746"/></svg><div style="left:471px;top:63.5px;width:8.5px;height:1.1px;background:#444746"></div><div style="left:520px;top:63.4px;width:7.6px;height:1.2px;background:#444746"></div><div style="left:523.2px;top:60.2px;width:1.2px;height:7.6px;background:#444746"></div><div class="t" style="left:548px;top:54.2px;height:20px;line-height:20px;font-size:10.5px;font-weight:700;color:#444746;transform:scaleX(.88);transform-origin:0 0">B</div><div class="t" style="left:572.3px;top:56.6px;height:14px;line-height:14px;font-size:12.5px;font-style:italic;font-weight:700;font-family:'Liberation Serif',serif;color:#444746">I</div><svg style="left:594.20px;top:57.90px" width="12.6" height="12.6" viewBox="0 0 24 24"><path d="M6.85 7.08C6.85 4.37 9.45 3 12.240 3c1.640 0 3 .49 3.900 1.280.77.650 1.460 1.730 1.460 3.240h-3.010c0-.31-.05-.59-.15-.85-.29-.86-1.200-1.280-2.250-1.280-1.860 0-2.340 1.020-2.340 1.700 0 .48.25.88.74 1.210.38.250.77.480 1.410.700H7.390c-.21-.34-.54-.89-.54-1.920zM21 12v-2H3v2h9.620c1.150.450 1.960.750 1.960 1.970 0 1-.81 1.670-2.280 1.670-1.540 0-2.930-.540-2.930-2.510H6.400c0 .55.080 1.130.240 1.580.81 2.290 3.290 3.300 5.670 3.300 2.270 0 5.300-.89 5.300-4.050 0-.3-.010-1.160-.480-1.940H21V12z" fill="#444746" stroke="#444746" stroke-width="0" /></svg><div class="t" style="left:621.7px;top:53.0px;height:20px;line-height:20px;font-size:11.03px;letter-spacing:0.241px;font-weight:400;color:#444746;">A</div><div style="left:616.5px;top:69px;width:18px;height:3px;background:linear-gradient(#000 0 34%,#8a8d91 34% 60%,#000 60%)"></div><svg style="left:650.5px;top:55.6px" width="14" height="14" viewBox="0 0 24 24"><path d="M16.560 8.940L7.620 0 6.210 1.410l2.380 2.380-5.150 5.150c-.59.59-.59 1.540 0 2.120l5.500 5.500c.29.290.68.440 1.060.440s.77-.15 1.060-.44l5.500-5.500c.59-.58.59-1.530 0-2.120zM5.210 10L10 5.210 14.790 10H5.210zM19 11.500s-2 2.170-2 3.500c0 1.100.9 2 2 2s2-.9 2-2c0-1.330-2-3.500-2-3.500z" fill="#444746"/></svg><div style="left:649px;top:69.8px;width:17px;height:2px;background:#fff"></div><svg style="left:676.50px;top:56.80px" width="14.2" height="14.2" viewBox="0 0 24 24"><path d="M3 3v18h18V3H3zm8 16H5v-6h6v6zm0-8H5V5h6v6zm8 8h-6v-6h6v6zm0-8h-6V5h6v6z" fill="#444746" stroke="#444746" stroke-width="0.35" /></svg><svg style="left:703.5px;top:58.9px" width="10.8" height="10" viewBox="0 0 14 13"><path d="M0.500 0.500h4v1.300h-2.700v3h-1.300z M13.500 0.500h-4v1.300h2.700v3h1.300z M0.500 12.500h4v-1.300h-2.700v-3h-1.300z M13.500 12.500h-4v-1.300h2.700v-3h1.300z M0.500 5.900h3.200V4.600L6.200 6.500 3.700 8.400V7.100H0.500z M13.500 5.900h-3.200V4.600L7.800 6.500l2.500 1.900V7.100h3.200z" fill="#b5b9be"/></svg><svg style="left:740.10px;top:57.40px" width="13.8" height="13.8" viewBox="0 0 24 24"><path d="M7 15v2h10v-2H7zm-4 6h18v-2H3v2zm0-8h18v-2H3v2zm4-6v2h10V7H7zM3 3v2h18V3H3z" fill="#444746" stroke="#444746" stroke-width="0.2" /></svg><svg style="left:771.90px;top:58.10px" width="13" height="13" viewBox="0 0 24 24"><path d="M8 19h3v4h2v-4h3l-4-4-4 4zm8-14h-3V1h-2v4H8l4 4 4-4zM4 11v2h16v-2H4z" fill="#444746" stroke="#444746" stroke-width="0.2" /></svg><svg style="left:804.6px;top:59.6px" width="9.2" height="9.8" viewBox="0 0 13 13"><path d="M0.500 0.500h1.400v12H0.500z M6.300 0.500h1.300v3.200H6.300z M6.300 9.300h1.300v3.200H6.300z M3.500 5.850h5.200V3.900L12 6.500 8.700 9.100V7.150H3.500z" fill="#444746"/></svg><div class="t" style="left:836.4px;top:52.9px;height:20px;line-height:20px;font-size:9.87px;letter-spacing:0.022px;font-weight:400;color:#444746;">A</div><svg style="left:835.5px;top:66.2px" width="10.5" height="4" viewBox="0 0 13 5"><path d="M0 2h9.500V0.300L12.500 2.600 9.500 4.900V3.200H0z" fill="#444746"/></svg><svg style="left:871.45px;top:56.70px" width="14.6" height="14.6" viewBox="0 0 24 24"><path d="M3.9 12c0-1.71 1.39-3.1 3.1-3.1h4V7H7c-2.76 0-5 2.24-5 5s2.24 5 5 5h4v-1.9H7c-1.71 0-3.1-1.39-3.1-3.1zM8 13h8v-2H8v2zm9-6h-4v1.9h4c1.71 0 3.1 1.39 3.1 3.1s-1.39 3.1-3.1 3.1h-4V17h4c2.76 0 5-2.24 5-5s-2.24-5-5-5z" fill="#444746" stroke="#444746" stroke-width="0.35" /></svg><svg style="left:895.70px;top:57.20px" width="14.6" height="14.6" viewBox="0 0 24 24"><path d="M20 2H4c-1.1 0-2 .9-2 2v18l4-4h14c1.1 0 2-.9 2-2V4c0-1.1-.9-2-2-2zm0 14H5.17L4 17.17V4h16v12zm-9-2h2v-3h3V9h-3V6h-2v3H8v2h3z" fill="#444746" stroke="#444746" stroke-width="0.35" /></svg><svg style="left:919.95px;top:56.70px" width="14.6" height="14.6" viewBox="0 0 24 24"><path d="M9 17H7v-7h2v7zm4 0h-2V7h2v10zm4 0h-2v-4h2v4zm2 2H5V5h14v14zm0-16H5c-1.1 0-2 .9-2 2v14c0 1.1.9 2 2 2h14c1.1 0 2-.9 2-2V5c0-1.1-.9-2-2-2z" fill="#444746" stroke="#444746" stroke-width="0.35" /></svg><svg style="left:944.70px;top:56.70px" width="14.6" height="14.6" viewBox="0 0 24 24"><path d="M4.25 5.61C6.27 8.2 10 13 10 13v6c0 .55.45 1 1 1h2c.55 0 1-.45 1-1v-6s3.72-4.8 5.74-7.39c.51-.66.04-1.61-.79-1.61H5.04c-.83 0-1.3.95-.79 1.61z" fill="#041e49" stroke="#041e49" stroke-width="0.35" /></svg><svg style="left:969.2px;top:58.2px" width="12" height="12" viewBox="0 0 12 12"><path d="M0 0h9.300v1.200H1.200v8H0z" fill="#444746"/><path d="M2.400 2.400h9.600v9.600H2.400z M3.600 3.600v1.600h7.200V3.600z M3.600 6.300v1.700h1.700V6.300z M6.400 6.300v1.700h1.600V6.300z M9.100 6.300v1.700h1.700V6.300z M3.600 9.100v1.700h1.700V9.100z M6.400 9.100v1.700h1.600V9.100z M9.100 9.100v1.700h1.700V9.100z" fill="#444746" fill-rule="evenodd"/></svg><div class="t" style="left:1005.0px;top:54.0px;height:20px;line-height:20px;font-size:12.5px;letter-spacing:-0.734px;font-weight:400;color:#444746;-webkit-text-stroke:0.3px #444746;">Σ</div><svg style="left:1282.70px;top:56.70px" width="14.6" height="14.6" viewBox="0 0 24 24"><path d="M7.41 15.41L12 10.83l4.59 4.58L18 14l-6-6-6 6z" fill="#444746" stroke="#444746" stroke-width="0.35" /></svg><svg style="left:216.00px;top:10.25px" width="13.5" height="13.5" viewBox="0 0 24 24"><path d="M22 9.24l-7.19-.62L12 2 9.19 8.63 2 9.24l5.46 4.73L5.82 21 12 17.27 18.18 21l-1.63-7.03L22 9.24zM12 15.4l-3.76 2.27 1-4.28-3.32-2.88 4.38-.38L12 6.1l1.71 4.04 4.38.38-3.32 2.88 1 4.28L12 15.4z" fill="#33373a" stroke="#33373a" stroke-width="0.35" /></svg><svg style="left:239.25px;top:10.25px" width="13.5" height="13.5" viewBox="0 0 24 24"><path d="M20 6h-8l-2-2H4c-1.1 0-2 .9-2 2v12c0 1.1.9 2 2 2h16c1.1 0 2-.9 2-2V8c0-1.1-.9-2-2-2zm0 12H4V6h5.17l2 2H20v10zm-7.6-1.6l1.400 1.400L18.600 13l-4.800-4.800-1.400 1.400L14.800 12H8v2h6.800l-2.400 2.400z" fill="#33373a" stroke="#33373a" stroke-width="0.35" /></svg><svg style="left:263.85px;top:10.45px" width="13.5" height="13.5" viewBox="0 0 24 24"><path d="M19.35 10.04C18.67 6.59 15.64 4 12 4 9.11 4 6.6 5.64 5.35 8.04 2.34 8.36 0 10.91 0 14c0 3.31 2.69 6 6 6h13c2.76 0 5-2.24 5-5 0-2.64-2.05-4.78-4.65-4.96zM19 18H6c-2.21 0-4-1.79-4-4 0-2.05 1.53-3.76 3.56-3.97l1.07-.11.5-.95C8.08 7.14 9.94 6 12 6c2.62 0 4.88 1.86 5.39 4.43l.3 1.5 1.53.11c1.56.1 2.78 1.41 2.78 2.96 0 1.65-1.35 3-3 3zm-9-3.82l-2.09-2.09L6.5 13.5 10 17l6.01-6.01-1.41-1.41z" fill="#33373a" stroke="#33373a" stroke-width="0.35" /></svg><svg style="left:1103.60px;top:12.40px" width="20.2" height="20.2" viewBox="0 0 24 24"><path d="M12 21q-3.450 0-6.012-2.287T3.050 13H5.100q.350 2.600 2.313 4.300T12 19q2.925 0 4.963-2.037T19 12q0-2.925-2.037-4.962T12 5q-1.725 0-3.225.8T6.250 8H9v2H3V4h2v2.350q1.275-1.600 3.113-2.475T12 3q1.875 0 3.513.712t2.850 1.925q1.212 1.213 1.925 2.850T21 12q0 1.875-.712 3.513t-1.925 2.850q-1.213 1.212-2.850 1.925T12 21m2.800-4.800L11 12.400V7h2v4.600l3.200 3.200z" fill="#2a2d30" stroke="#2a2d30" stroke-width="0" /></svg><svg style="left:1143.10px;top:13.60px" width="18" height="18" viewBox="0 0 24 24"><path d="M21.99 4c0-1.1-.89-2-1.99-2H4c-1.1 0-2 .9-2 2v12c0 1.1.9 2 2 2h14l4 4-.01-18zM20 4v13.17L18.83 16H4V4h16zM6 12h12v2H6zm0-3h12v2H6zm0-3h12v2H6z" fill="#2a2d30" stroke="#2a2d30" stroke-width="0" /></svg><svg style="left:1182.6px;top:12.1px" width="20.5" height="20.5" viewBox="0 0 24 24"><rect x="4" y="6" width="12" height="12" rx="2.600" fill="none" stroke="#2a2d30" stroke-width="1.900"/><path d="M16.500 10.200L21 7.200v9.600l-4.500-3z" fill="#2a2d30" stroke="#2a2d30" stroke-width="0.800" stroke-linejoin="round"/></svg><svg style="left:1243.25px;top:15.35px" width="14.3" height="14.3" viewBox="0 0 24 24"><path d="M9 13.75c-2.34 0-7 1.17-7 3.5V19h14v-1.75c0-2.33-4.66-3.5-7-3.5zM4.34 17c.84-.58 2.87-1.25 4.66-1.25s3.82.67 4.66 1.25H4.34zM9 12c1.93 0 3.5-1.57 3.5-3.5S10.93 5 9 5 5.5 6.57 5.5 8.5 7.07 12 9 12zm0-5c.83 0 1.5.67 1.5 1.5S9.83 10 9 10s-1.5-.67-1.5-1.5S8.170 7 9 7zm7.04 6.81c1.16.84 1.96 1.96 1.96 3.44V19h4v-1.75c0-2.02-3.5-3.17-5.960-3.44zM15 12c1.93 0 3.5-1.57 3.5-3.5S16.930 5 15 5c-.54 0-1.040.13-1.5.35.63.89 1 1.980 1 3.150s-.37 2.260-1 3.150c.460.220.960.350 1.500.350z" fill="#0b2a42" stroke="#0b2a42" stroke-width="0.35" /></svg></div></body></html>
